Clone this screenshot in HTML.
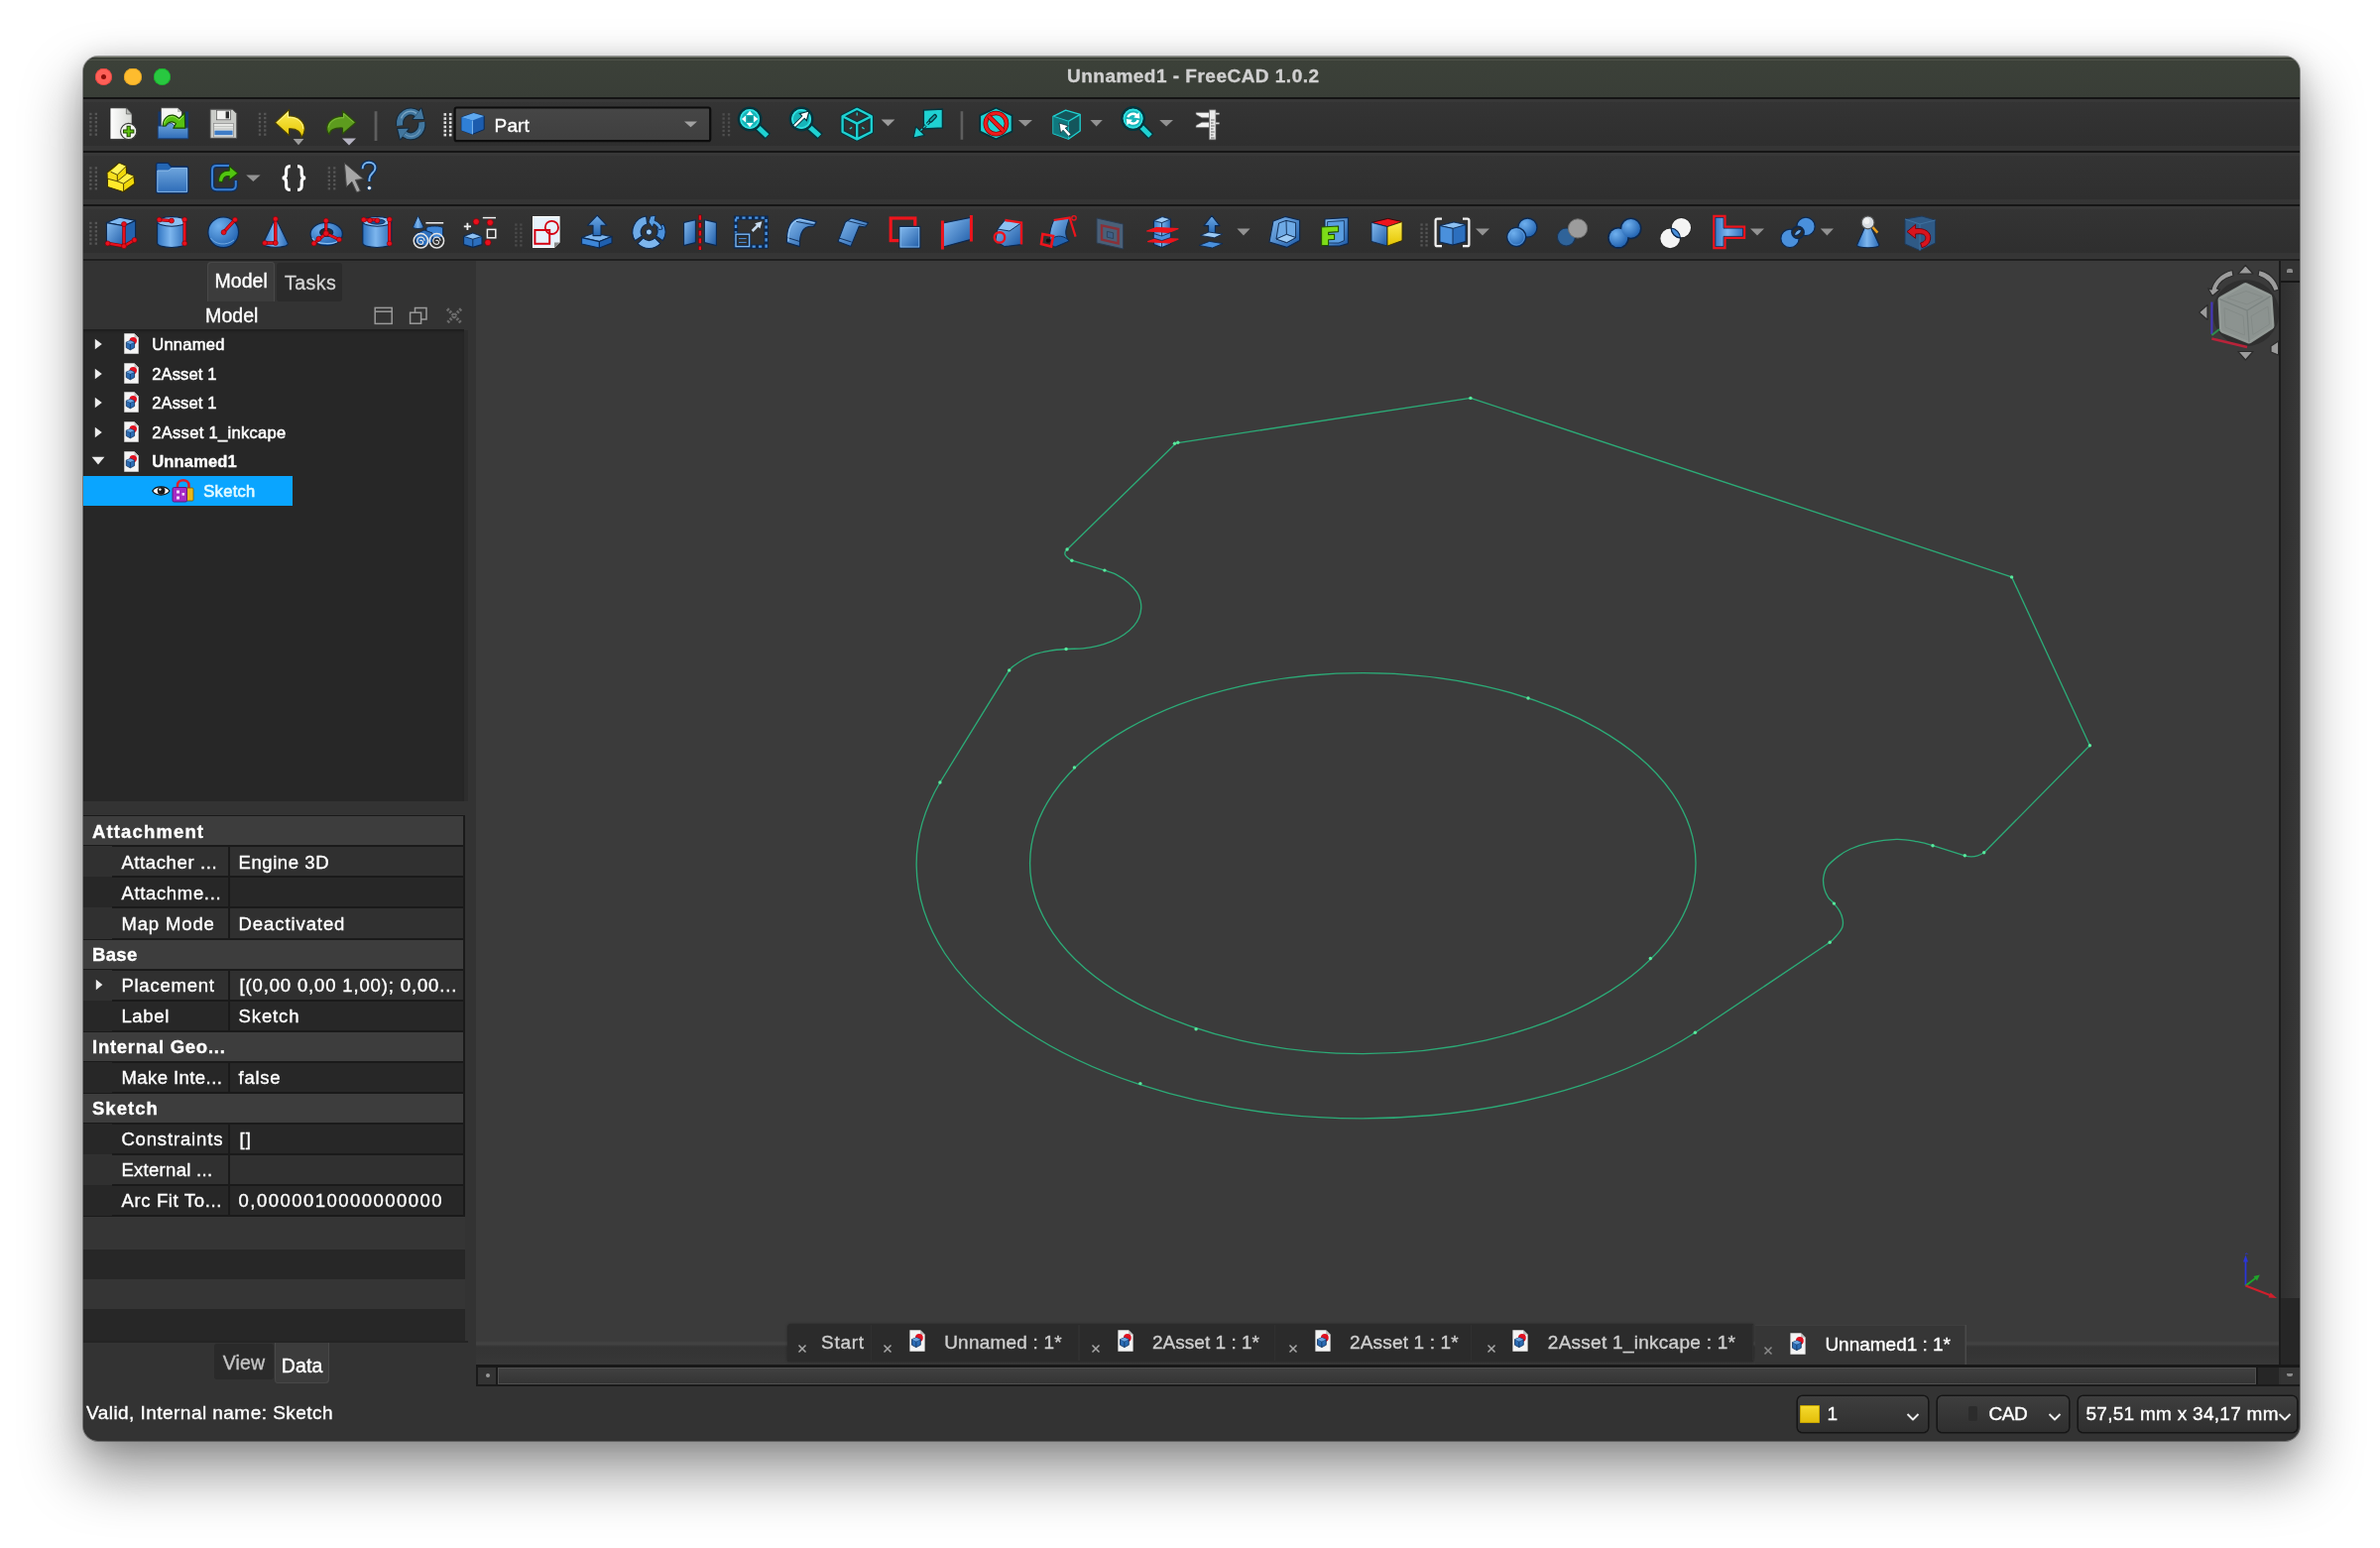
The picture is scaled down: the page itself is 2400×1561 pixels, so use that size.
<!DOCTYPE html>
<html><head><meta charset="utf-8"><title>FreeCAD</title><style>
html,body{margin:0;padding:0;}
body{width:2400px;height:1561px;background:#ffffff;position:relative;overflow:hidden;font-family:"Liberation Sans",sans-serif;}
#shadow{position:absolute;left:83.5px;top:56.5px;width:2235px;height:1396px;border-radius:15px;
 box-shadow:0 30px 58px 4px rgba(0,0,0,0.40),0 4px 26px 0 rgba(0,0,0,0.17),0 0 0 1px rgba(0,0,0,0.35);}
#win{position:absolute;left:83.5px;top:56.5px;width:2235px;height:1396px;border-radius:15px;overflow:hidden;background:#323232;}
#abs{position:absolute;left:-83.5px;top:-56.5px;width:2400px;height:1561px;will-change:transform;}
.r{position:absolute;display:block;}
.t{position:absolute;white-space:nowrap;line-height:1;-webkit-text-stroke:0.35px currentColor;}
</style></head><body>
<div id="shadow"></div>
<div id="win"><div id="abs">
<div class="r" style="left:0px;top:0px;width:2400px;height:1561px;background:#323232;"></div>
<div class="r" style="left:0px;top:56px;width:2400px;height:42.5px;background:#3a3f38;background:linear-gradient(#3c4139,#393e37);"></div>
<div class="r" style="left:0px;top:97.5px;width:2400px;height:2.5px;background:#141414;"></div>
<div class="r" style="left:0px;top:56.5px;width:2400px;height:1.4px;background:#74786c;"></div>
<div class="r" style="left:0px;top:57.9px;width:2400px;height:1.6px;background:#373b33;"></div>
<div class="r" style="left:0px;top:59.5px;width:2400px;height:1.6px;background:#4e5248;"></div>
<div class="r" style="left:0px;top:100px;width:2400px;height:51.5px;background:#2f2f2f;background:linear-gradient(#343434,#2e2e2e);"></div>
<div class="r" style="left:0px;top:153.5px;width:2400px;height:52.0px;background:#2f2f2f;background:linear-gradient(#343434,#2e2e2e);"></div>
<div class="r" style="left:0px;top:207.5px;width:2400px;height:52.5px;background:#2f2f2f;background:linear-gradient(#343434,#2e2e2e);"></div>
<div class="r" style="left:0px;top:100px;width:2400px;height:3px;background:#383838;"></div>
<div class="r" style="left:0px;top:146.5px;width:2400px;height:5px;background:#353535;"></div>
<div class="r" style="left:0px;top:151.5px;width:2400px;height:2px;background:#161616;"></div>
<div class="r" style="left:0px;top:153.5px;width:2400px;height:3px;background:#383838;"></div>
<div class="r" style="left:0px;top:200.5px;width:2400px;height:5px;background:#353535;"></div>
<div class="r" style="left:0px;top:205.5px;width:2400px;height:2px;background:#161616;"></div>
<div class="r" style="left:0px;top:207.5px;width:2400px;height:3px;background:#383838;"></div>
<div class="r" style="left:0px;top:255px;width:2400px;height:5px;background:#353535;"></div>
<div class="r" style="left:0px;top:260px;width:2400px;height:2px;background:#161616;"></div>
<div class="r" style="left:0px;top:260px;width:2400px;height:1px;background:#383838;"></div>
<div class="r" style="left:0px;top:261px;width:2400px;height:2px;background:#1f1f1f;"></div>
<div class="r" style="left:0px;top:263px;width:480px;height:1137px;background:#333333;"></div>
<div class="r" style="left:480px;top:263px;width:1818px;height:1089px;background:#3b3b3b;"></div>
<div class="r" style="left:95.7px;top:68.60000000000001px;width:17.6px;height:17.6px;border-radius:50%;background:#ff5f57;box-shadow:inset 0 0 0 0.7px #e0443e;"></div>
<div class="r" style="left:125.2px;top:68.60000000000001px;width:17.6px;height:17.6px;border-radius:50%;background:#febc2e;box-shadow:inset 0 0 0 0.7px #dea123;"></div>
<div class="r" style="left:154.7px;top:68.60000000000001px;width:17.6px;height:17.6px;border-radius:50%;background:#28c840;box-shadow:inset 0 0 0 0.7px #1aab29;"></div>
<div class="r" style="left:101.9px;top:74.80000000000001px;width:5.2px;height:5.2px;border-radius:50%;background:#8c0f0a;"></div>
<div class="t" style="left:1076.00px;top:67.42px;font-size:19px;color:#d0d0d0;font-weight:bold;letter-spacing:0.485px;">Unnamed1 - FreeCAD 1.0.2</div>
<svg class="r" style="left:84px;top:99px;" width="2235" height="163" viewBox="84 99 2235 163"><defs>
<linearGradient id="gB" x1="0" y1="0" x2="0" y2="1"><stop offset="0" stop-color="#6eaae6"/><stop offset="1" stop-color="#2668b4"/></linearGradient>
<linearGradient id="gBh" x1="0" y1="0" x2="1" y2="0"><stop offset="0" stop-color="#2f74c2"/><stop offset="0.45" stop-color="#7db6ee"/><stop offset="1" stop-color="#2a6ab6"/></linearGradient>
<linearGradient id="gBd" x1="0" y1="0" x2="1" y2="1"><stop offset="0" stop-color="#86bcf0"/><stop offset="1" stop-color="#1d5aa6"/></linearGradient>
<radialGradient id="gBr" cx="0.35" cy="0.3" r="0.8"><stop offset="0" stop-color="#6fb0ee"/><stop offset="1" stop-color="#1c5dac"/></radialGradient>
<linearGradient id="gP" x1="0" y1="0" x2="1" y2="0"><stop offset="0" stop-color="#ffffff"/><stop offset="1" stop-color="#d6d8d4"/></linearGradient>
<linearGradient id="gY" x1="0" y1="0" x2="0" y2="1"><stop offset="0" stop-color="#fdee58"/><stop offset="1" stop-color="#e4c400"/></linearGradient>
<linearGradient id="gF" x1="0" y1="0" x2="0" y2="1"><stop offset="0" stop-color="#6da4dc"/><stop offset="1" stop-color="#2f6db8"/></linearGradient>
<linearGradient id="gTb" x1="0" y1="0" x2="0" y2="1"><stop offset="0" stop-color="#464646"/><stop offset="1" stop-color="#3f3f3f"/></linearGradient>
</defs>
<rect x="90.2" y="113.8" width="2.3" height="2.3" fill="#565656"/><rect x="95.7" y="113.8" width="2.3" height="2.3" fill="#565656"/><rect x="90.2" y="117.9" width="2.3" height="2.3" fill="#565656"/><rect x="95.7" y="117.9" width="2.3" height="2.3" fill="#565656"/><rect x="90.2" y="122.0" width="2.3" height="2.3" fill="#565656"/><rect x="95.7" y="122.0" width="2.3" height="2.3" fill="#565656"/><rect x="90.2" y="126.2" width="2.3" height="2.3" fill="#565656"/><rect x="95.7" y="126.2" width="2.3" height="2.3" fill="#565656"/><rect x="90.2" y="130.3" width="2.3" height="2.3" fill="#565656"/><rect x="95.7" y="130.3" width="2.3" height="2.3" fill="#565656"/><rect x="90.2" y="134.5" width="2.3" height="2.3" fill="#565656"/><rect x="95.7" y="134.5" width="2.3" height="2.3" fill="#565656"/>
<path d="M111 108.8 H127.4 L133.2 115 V140.4 H111 Z" fill="url(#gP)" stroke="#1e1e1e" stroke-width="0.8"/>
<path d="M127.4 108.8 V115 H133.2 Z" fill="#b9bbb7" stroke="#444" stroke-width="0.6"/>
<circle cx="129.7" cy="132.5" r="8.1" fill="#f5f5f3" stroke="#3a3a3a" stroke-width="1.1"/>
<path d="M129.7 126.8 V138.2 M124 132.5 H135.4" stroke="#1f4a00" stroke-width="4.2"/>
<path d="M129.7 127.8 V137.2 M125 132.5 H134.4" stroke="#5fc010" stroke-width="2.2"/>
<path d="M159.4 112.4 H163 V128 H159.4 Z M186.6 112.4 H190 V128 H186.6 Z" fill="#16396e"/>
<path d="M162.4 108.8 H179 L183.4 113 V128 H162.4 Z" fill="#f6f6f4" stroke="#2a2a2a" stroke-width="0.6"/>
<path d="M179 108.8 V113 H183.4 Z" fill="#b9bbb7"/>
<path d="M159.2 127 H166 C168 127 170.6 123.4 173.6 124.6 C176 125.6 175.6 128.6 178 128.8 H189.8 V139.8 H159.2 Z" fill="url(#gF)" stroke="#173f7a" stroke-width="0.9"/>
<path d="M164.2 126.8 C164.6 119 169.5 115.6 174.5 116.2 C177.5 116.6 179.2 118.2 180.6 119.4 L186.2 113.8 L186.8 129.2 L174.8 129.2 L177.4 124.6 C175.4 123 172.6 122.6 170.4 123.6 C168.6 124.6 167.6 125.8 167.2 127 Z" fill="#56c112" stroke="#1a4a00" stroke-width="1.2" stroke-linejoin="round"/>
<path d="M165.6 124.4 C166.6 119.6 170.6 117 174.6 117.6 C177 118 178.8 119.6 180.8 121.2 L185 117" fill="none" stroke="#9be850" stroke-width="1"/>
<path d="M212 110.2 H234.5 L238.8 114.5 V139.4 H212 Z" fill="#c9cbc7" stroke="#4a4a4a" stroke-width="1"/>
<rect x="218.5" y="111.2" width="14" height="9.6" fill="#f2f2f0" stroke="#555" stroke-width="0.7"/>
<rect x="227.6" y="112.4" width="3.4" height="7" fill="#2b2b2b"/>
<rect x="215.4" y="124.6" width="20.2" height="13.4" fill="#e7e8e5" stroke="#8a8a8a" stroke-width="0.7"/>
<path d="M216 127.6 H235 M216 130 H235" stroke="#b4b6b2" stroke-width="0.8"/>
<rect x="216.4" y="131.6" width="18.2" height="4.6" fill="#3e7cc6"/>
<rect x="260.8" y="113.8" width="2.3" height="2.3" fill="#565656"/><rect x="266.1" y="113.8" width="2.3" height="2.3" fill="#565656"/><rect x="260.8" y="117.9" width="2.3" height="2.3" fill="#565656"/><rect x="266.1" y="117.9" width="2.3" height="2.3" fill="#565656"/><rect x="260.8" y="122.0" width="2.3" height="2.3" fill="#565656"/><rect x="266.1" y="122.0" width="2.3" height="2.3" fill="#565656"/><rect x="260.8" y="126.2" width="2.3" height="2.3" fill="#565656"/><rect x="266.1" y="126.2" width="2.3" height="2.3" fill="#565656"/><rect x="260.8" y="130.3" width="2.3" height="2.3" fill="#565656"/><rect x="266.1" y="130.3" width="2.3" height="2.3" fill="#565656"/><rect x="260.8" y="134.5" width="2.3" height="2.3" fill="#565656"/><rect x="266.1" y="134.5" width="2.3" height="2.3" fill="#565656"/>
<path d="M277.4 123.6 L291.6 110.4 L291.6 117 C300.6 116.6 307.8 122.6 307.2 130.8 C307 134 305.6 136.6 303.6 138.6 C303.8 133.4 299.8 129.4 291.6 129.8 L291.6 136.6 Z" fill="url(#gY)" stroke="#4e4300" stroke-width="1.2" stroke-linejoin="round"/>
<path d="M279.6 123.6 L290.4 113.6 L290.4 118.4 C299 117.8 305.6 122.8 305.8 130" fill="none" stroke="#fff7a0" stroke-width="0.9"/>
<path d="M295.6 140 H306.4 L301.0 146.2 Z" fill="#9c9c9c"/>
<path d="M358.8 123.4 L345.4 111.8 L345.4 117.4 C336.6 117.2 329.4 122.6 329.6 130 C329.8 132.6 330.8 134.4 332.4 135.6 C332.4 131.4 336.6 128.6 345.4 129 L345.4 135 Z" fill="#5d9c1e" stroke="#2b4d08" stroke-width="1.2" stroke-linejoin="round"/>
<path d="M356.6 123.4 L346.6 114.6 L346.6 118.8 C338.4 118.4 332 122.6 331.2 128.6" fill="none" stroke="#86c440" stroke-width="0.9"/>
<path d="M345 139.6 H359 L352.0 146.4 Z" fill="#b5b3c2"/>
<rect x="377.6" y="112.2" width="2.8" height="29.8" fill="#5e5e5e"/>
<path d="M403.1 126.6 A11.2 12.4 0 0 1 420.6 114.7" fill="none" stroke="#14293b" stroke-width="8.2"/><path d="M424.7 109.5 L416.6 120.0 L427.3 119.9 Z" fill="#14293b" stroke="#14293b" stroke-width="2.2" stroke-linejoin="round"/><path d="M403.1 126.6 A11.2 12.4 0 0 1 420.6 114.7" fill="none" stroke="#42779f" stroke-width="6"/><path d="M424.7 109.5 L416.6 120.0 L427.3 119.9 Z" fill="#42779f"/>
<path d="M425.3 123.2 A11.2 12.4 0 0 1 407.8 135.1" fill="none" stroke="#14293b" stroke-width="8.2"/><path d="M403.7 140.3 L411.8 129.8 L401.1 129.9 Z" fill="#14293b" stroke="#14293b" stroke-width="2.2" stroke-linejoin="round"/><path d="M425.3 123.2 A11.2 12.4 0 0 1 407.8 135.1" fill="none" stroke="#42779f" stroke-width="6"/><path d="M403.7 140.3 L411.8 129.8 L401.1 129.9 Z" fill="#42779f"/>
<path d="M404.6 119.4 A10 11 0 0 1 420 114.4" fill="none" stroke="#7aa6c6" stroke-width="1.4"/>
<path d="M423.8 130.4 A10 11 0 0 1 408.4 135.4" fill="none" stroke="#6a98ba" stroke-width="1.2"/>
<rect x="447.5" y="114.1" width="2.6" height="2.6" fill="#dedede"/><rect x="452.9" y="114.1" width="2.6" height="2.6" fill="#dedede"/><rect x="447.5" y="118.3" width="2.6" height="2.6" fill="#dedede"/><rect x="452.9" y="118.3" width="2.6" height="2.6" fill="#dedede"/><rect x="447.5" y="122.4" width="2.6" height="2.6" fill="#dedede"/><rect x="452.9" y="122.4" width="2.6" height="2.6" fill="#dedede"/><rect x="447.5" y="126.6" width="2.6" height="2.6" fill="#dedede"/><rect x="452.9" y="126.6" width="2.6" height="2.6" fill="#dedede"/><rect x="447.5" y="130.7" width="2.6" height="2.6" fill="#dedede"/><rect x="452.9" y="130.7" width="2.6" height="2.6" fill="#dedede"/><rect x="447.5" y="134.8" width="2.6" height="2.6" fill="#dedede"/><rect x="452.9" y="134.8" width="2.6" height="2.6" fill="#dedede"/>
<rect x="458.6" y="108.5" width="257.6" height="33.7" rx="2" fill="url(#gTb)" stroke="#0d0d0d" stroke-width="2.2"/>
<path d="M465.4 118.2 L477.6 114 L488.2 117 L488.2 130.6 L476.4 135.4 L465.4 131.4 Z" fill="#1c5cae" stroke="#0b2a55" stroke-width="1" stroke-linejoin="round"/>
<path d="M465.4 118.2 L477.6 114 L488.2 117 L476.4 121.6 Z" fill="#5fa8ee"/>
<path d="M465.4 118.2 L476.4 121.6 V135.4 L465.4 131.4 Z" fill="#2f7fd6"/>
<path d="M476.4 121.6 V135.4" stroke="#8cc4f8" stroke-width="0.9"/>
<path d="M690 122.4 H703 L696.5 128.2 Z" fill="#a2a2a2"/>
<rect x="728.5" y="114.2" width="2.3" height="2.3" fill="#4e4e4e"/><rect x="733.9" y="114.2" width="2.3" height="2.3" fill="#4e4e4e"/><rect x="728.5" y="118.4" width="2.3" height="2.3" fill="#4e4e4e"/><rect x="733.9" y="118.4" width="2.3" height="2.3" fill="#4e4e4e"/><rect x="728.5" y="122.5" width="2.3" height="2.3" fill="#4e4e4e"/><rect x="733.9" y="122.5" width="2.3" height="2.3" fill="#4e4e4e"/><rect x="728.5" y="126.7" width="2.3" height="2.3" fill="#4e4e4e"/><rect x="733.9" y="126.7" width="2.3" height="2.3" fill="#4e4e4e"/><rect x="728.5" y="130.8" width="2.3" height="2.3" fill="#4e4e4e"/><rect x="733.9" y="130.8" width="2.3" height="2.3" fill="#4e4e4e"/><rect x="728.5" y="135.0" width="2.3" height="2.3" fill="#4e4e4e"/><rect x="733.9" y="135.0" width="2.3" height="2.3" fill="#4e4e4e"/>
<path d="M762.8 126.7 L774.2 137.6" stroke="#05343c" stroke-width="8.4" stroke-linecap="butt"/><path d="M762.8 126.7 L773.6 137" stroke="#1fd2d2" stroke-width="5" stroke-linecap="butt"/><circle cx="756.1" cy="120" r="11.2" fill="#16b4b8" stroke="#05343c" stroke-width="2.6"/><circle cx="756.1" cy="120" r="9.1" fill="none" stroke="#30e0e0" stroke-width="1.8"/>
<path d="M756.1 111.8 L759.6 116 H752.6 Z M756.1 128.2 L759.6 124 H752.6 Z M747.9 120 L752.1 116.5 V123.5 Z M764.3 120 L760.1 116.5 V123.5 Z" fill="#ffffff"/>
<rect x="753.4" y="117.3" width="5.4" height="5.4" fill="#0e8f92"/>
<path d="M814.8 126.7 L827.0 137.6" stroke="#05343c" stroke-width="8.4" stroke-linecap="butt"/><path d="M814.8 126.7 L826.4 137" stroke="#1fd2d2" stroke-width="5" stroke-linecap="butt"/><circle cx="808.1" cy="120" r="11.2" fill="#16b4b8" stroke="#05343c" stroke-width="2.6"/><circle cx="808.1" cy="120" r="9.1" fill="none" stroke="#30e0e0" stroke-width="1.8"/>
<path d="M801.2 127 L811.6 116.6" stroke="#05343c" stroke-width="4"/><path d="M816 112 L813.4 121.6 L806.4 114.6 Z" fill="#ffffff" stroke="#05343c" stroke-width="1.2"/><path d="M801.2 127 L811.6 116.6" stroke="#ffffff" stroke-width="2.2"/>
<path d="M864.2 109.8 L878.8 117.2 V133 L864.2 140.4 L849.6 133 V117.2 Z M849.6 117.2 L864.2 124.6 L878.8 117.2 M864.2 124.6 V140.4" fill="none" stroke="#05343c" stroke-width="4.4" stroke-linejoin="round"/>
<path d="M864.2 109.8 L878.8 117.2 V133 L864.2 140.4 L849.6 133 V117.2 Z M849.6 117.2 L864.2 124.6 L878.8 117.2 M864.2 124.6 V140.4" fill="none" stroke="#1fd2d2" stroke-width="2.3" stroke-linejoin="round"/>
<path d="M864.2 113.6 V116.6 M856.8 130 L859.2 128.4 M871.6 130 L869.2 128.4" stroke="#1fd2d2" stroke-width="1.3"/>
<path d="M888.6 120.6 H902.4 L895.5 127.2 Z" fill="#9c9c9c"/>
<path d="M931.4 111 L950.4 110 L950.4 129 L931.4 130 Z" fill="#1fd2d2" stroke="#05343c" stroke-width="1.4" stroke-linejoin="round"/>
<path d="M940.6 119.4 L926.6 133.4" stroke="#05343c" stroke-width="3.2" stroke-dasharray="3 2"/><path d="M940.6 119.4 L926.6 133.4" stroke="#1fd2d2" stroke-width="1.2" stroke-dasharray="3 2"/>
<path d="M921 139 L923.6 127.6 L932.4 136.4 Z" fill="#1fd2d2" stroke="#05343c" stroke-width="1.2" stroke-linejoin="round"/>
<path d="M938.4 121.6 L942.8 117.2" stroke="#05343c" stroke-width="4.4" stroke-linecap="round"/><path d="M938.6 121.4 L942.6 117.4" stroke="#16a4a8" stroke-width="2" stroke-linecap="round"/>
<rect x="968.6" y="112.2" width="2.6" height="28.6" fill="#5e5e5e"/>
<path d="M1004.4 108.8 L1020.6 116.4 V132.6 L1004.4 140.4 L988.2 132.6 V116.4 Z" fill="#1fd2d2" stroke="#05343c" stroke-width="1.8" stroke-linejoin="round"/>
<circle cx="1004.4" cy="124.6" r="10.6" fill="none" stroke="#7a0000" stroke-width="4.6"/>
<circle cx="1004.4" cy="124.6" r="10.6" fill="none" stroke="#ee1c1c" stroke-width="3.2"/>
<path d="M997 117.2 L1011.8 132" stroke="#7a0000" stroke-width="4.6"/><path d="M997 117.2 L1011.8 132" stroke="#ee1c1c" stroke-width="3.2"/>
<path d="M1026.8 121 H1041 L1033.9 127.6 Z" fill="#929292"/>
<path d="M1062 117.4 L1074.6 111.2 L1089.2 115.4 V132 L1077.4 140.2 L1062 134.6 Z" fill="#14565c" stroke="#1fd2d2" stroke-width="1.3" stroke-linejoin="round"/>
<path d="M1062 117.4 L1077.4 122.4 L1089.2 115.4 M1077.4 122.4 V140.2" fill="none" stroke="#1fd2d2" stroke-width="1.3"/>
<path d="M1062 117.4 L1077.4 122.4 V140.2 L1062 134.6 Z" fill="#0f7f86" opacity="0.8"/>
<path d="M1068 124 L1077.6 127 L1074.2 129.2 L1080 135.4 L1077.6 137.4 L1072 131.2 L1069.6 134.2 Z" fill="#ffffff" stroke="#0a3038" stroke-width="0.8"/>
<path d="M1099.4 121 H1111.8 L1105.6 127.6 Z" fill="#929292"/>
<path d="M1149.3 126.3 L1160.6 137.6" stroke="#05343c" stroke-width="8.4" stroke-linecap="butt"/><path d="M1149.3 126.3 L1160 137" stroke="#1fd2d2" stroke-width="5" stroke-linecap="butt"/><circle cx="1142.6" cy="119.6" r="11.2" fill="#16b4b8" stroke="#05343c" stroke-width="2.6"/><circle cx="1142.6" cy="119.6" r="9.1" fill="none" stroke="#30e0e0" stroke-width="1.8"/>
<path d="M1136.2 118 C1137.4 113.8 1143 112.2 1146.8 115 L1148.6 113.2 L1149.4 119.4 L1143.2 118.6 L1145 116.8 C1142.6 115.2 1139.6 116.2 1138.6 118.6 Z" fill="#ffffff"/>
<path d="M1149 121.4 C1147.8 125.6 1142.2 127.2 1138.4 124.4 L1136.6 126.2 L1135.8 120 L1142 120.8 L1140.2 122.6 C1142.6 124.2 1145.6 123.2 1146.6 120.8 Z" fill="#ffffff"/>
<path d="M1169.2 121 H1183 L1176.1 127.6 Z" fill="#929292"/>
<path d="M1219.4 110.8 H1226 V140.8 H1219.4 Z" fill="#e9e9e9" stroke="#6a6a6a" stroke-width="0.7"/>
<path d="M1206 113.4 H1219.4 V118.8 H1212 L1206 115.4 Z" fill="#f2f2f2" stroke="#6a6a6a" stroke-width="0.7"/>
<path d="M1206 126.6 L1212 123.2 H1219.4 V128.6 H1206 Z" fill="#f2f2f2" stroke="#6a6a6a" stroke-width="0.7"/>
<path d="M1226 114.6 H1229.6 M1226 124.4 H1229.6" stroke="#d4d4d4" stroke-width="1.6"/>
<path d="M1221 121 H1224.6 M1221 124 H1223.6 M1221 127 H1224.6 M1221 130 H1223.6 M1221 133 H1224.6 M1221 136 H1223.6 M1221 139 H1224.6" stroke="#555" stroke-width="0.9"/>
<rect x="90.2" y="168.3" width="2.3" height="2.3" fill="#565656"/><rect x="95.7" y="168.3" width="2.3" height="2.3" fill="#565656"/><rect x="90.2" y="172.5" width="2.3" height="2.3" fill="#565656"/><rect x="95.7" y="172.5" width="2.3" height="2.3" fill="#565656"/><rect x="90.2" y="176.7" width="2.3" height="2.3" fill="#565656"/><rect x="95.7" y="176.7" width="2.3" height="2.3" fill="#565656"/><rect x="90.2" y="180.8" width="2.3" height="2.3" fill="#565656"/><rect x="95.7" y="180.8" width="2.3" height="2.3" fill="#565656"/><rect x="90.2" y="184.9" width="2.3" height="2.3" fill="#565656"/><rect x="95.7" y="184.9" width="2.3" height="2.3" fill="#565656"/><rect x="90.2" y="189.1" width="2.3" height="2.3" fill="#565656"/><rect x="95.7" y="189.1" width="2.3" height="2.3" fill="#565656"/>
<path d="M108.2 173.8 L120.2 164.3 L127.3 167.5 L127.7 174.6 L135 177.6 L135.9 185.2 L124.6 193.4 L108.8 188.3 Z" fill="#f0d80a" stroke="#3e3300" stroke-width="1.3" stroke-linejoin="round"/>
<path d="M111.6 173.2 L120.2 164.8 L127 167.8 L118.3 176.3 Z" fill="#fff45a"/>
<path d="M118.3 182.8 L127.8 175 L134.8 177.8 L124.6 185.2 Z" fill="#fff045"/>
<path d="M109 180.4 L118.3 182.8 L124.6 185.2 V193 L109 188 Z" fill="#ffe92a"/>
<path d="M108.6 174 L118.3 176.3 V182.8 L108.8 180.2 Z" fill="#f8e020"/>
<path d="M111.6 173.2 L118.3 176.3 L127.1 167.7 M118.3 176.3 V182.8 M108.6 180.2 L118.3 182.8 L127.8 175 M118.3 182.8 L124.6 185.2 L135.2 177.8 M124.6 185.2 V193.4" fill="none" stroke="#3e3300" stroke-width="0.9" stroke-linejoin="round"/>
<path d="M157.6 166 Q157.6 164.4 159.4 164.4 H169.4 L172.6 168 H188 Q189.8 168 189.8 169.8 V193 Q189.8 194.8 188 194.8 H159.4 Q157.6 194.8 157.6 193 Z" fill="#2466b4" stroke="#0c2d5e" stroke-width="1.3"/>
<path d="M158.8 172 H170 L173 169.6 H188.6 V193.4 H158.8 Z" fill="url(#gF)" stroke="#9cc5ee" stroke-width="0.8"/>
<path d="M231 167 H218.4 Q214 167 214 171.4 V186.8 Q214 191.2 218.4 191.2 H233.4 Q237.8 191.2 237.8 186.8 V182" fill="none" stroke="#0d2f5e" stroke-width="4.4"/>
<path d="M231 167 H218.4 Q214 167 214 171.4 V186.8 Q214 191.2 218.4 191.2 H233.4 Q237.8 191.2 237.8 186.8 V182" fill="none" stroke="#3a7ed0" stroke-width="2"/>
<path d="M220.6 183 C220.2 175.4 225.4 171.6 231.2 172.2 L231.4 167.6 L240 174.8 L231 181.8 L231.2 177.6 C227.4 177 224.8 179 224.4 183.6 Z" fill="#52c510" stroke="#1c4f00" stroke-width="1.1" stroke-linejoin="round"/>
<path d="M248.2 176.4 H262.6 L255.4 183 Z" fill="#929292"/>
<path d="M292.8 167.6 C289 167.6 288.6 169.4 288.6 172 V175.6 C288.6 178.4 287.4 179.5 284.6 179.5 C287.4 179.5 288.6 180.6 288.6 183.4 V187 C288.6 189.6 289 191.4 292.8 191.4" fill="none" stroke="#ffffff" stroke-width="3.2"/>
<path d="M300 167.6 C303.8 167.6 304.2 169.4 304.2 172 V175.6 C304.2 178.4 305.4 179.5 308.2 179.5 C305.4 179.5 304.2 180.6 304.2 183.4 V187 C304.2 189.6 303.8 191.4 300 191.4" fill="none" stroke="#ffffff" stroke-width="3.2"/>
<rect x="330.7" y="168.3" width="2.3" height="2.3" fill="#565656"/><rect x="336.1" y="168.3" width="2.3" height="2.3" fill="#565656"/><rect x="330.7" y="172.5" width="2.3" height="2.3" fill="#565656"/><rect x="336.1" y="172.5" width="2.3" height="2.3" fill="#565656"/><rect x="330.7" y="176.7" width="2.3" height="2.3" fill="#565656"/><rect x="336.1" y="176.7" width="2.3" height="2.3" fill="#565656"/><rect x="330.7" y="180.8" width="2.3" height="2.3" fill="#565656"/><rect x="336.1" y="180.8" width="2.3" height="2.3" fill="#565656"/><rect x="330.7" y="184.9" width="2.3" height="2.3" fill="#565656"/><rect x="336.1" y="184.9" width="2.3" height="2.3" fill="#565656"/><rect x="330.7" y="189.1" width="2.3" height="2.3" fill="#565656"/><rect x="336.1" y="189.1" width="2.3" height="2.3" fill="#565656"/>
<path d="M347.4 164.4 L366.4 180.4 L358.4 181.4 L363.4 192.4 L359.8 194 L354.8 183.2 L349.4 188.6 Z" fill="#a6a6a6" stroke="#4a4a4a" stroke-width="1" stroke-linejoin="round"/>
<path d="M365.6 170.2 C365.6 165.6 369 163.8 372 163.8 C375.6 163.8 378.4 166 378.4 169.4 C378.4 174.4 372.4 174.8 372.4 180.6 V183" fill="none" stroke="#0c2f5c" stroke-width="4.6"/>
<path d="M365.6 170.2 C365.6 165.6 369 163.8 372 163.8 C375.6 163.8 378.4 166 378.4 169.4 C378.4 174.4 372.4 174.8 372.4 180.6 V183" fill="none" stroke="#7ab4ee" stroke-width="1.9"/>
<circle cx="372.4" cy="189.6" r="2.2" fill="#e8e8e8" stroke="#11365f" stroke-width="1"/>
<rect x="90.2" y="223.8" width="2.3" height="2.3" fill="#565656"/><rect x="95.7" y="223.8" width="2.3" height="2.3" fill="#565656"/><rect x="90.2" y="227.9" width="2.3" height="2.3" fill="#565656"/><rect x="95.7" y="227.9" width="2.3" height="2.3" fill="#565656"/><rect x="90.2" y="232.1" width="2.3" height="2.3" fill="#565656"/><rect x="95.7" y="232.1" width="2.3" height="2.3" fill="#565656"/><rect x="90.2" y="236.2" width="2.3" height="2.3" fill="#565656"/><rect x="95.7" y="236.2" width="2.3" height="2.3" fill="#565656"/><rect x="90.2" y="240.3" width="2.3" height="2.3" fill="#565656"/><rect x="95.7" y="240.3" width="2.3" height="2.3" fill="#565656"/><rect x="90.2" y="244.5" width="2.3" height="2.3" fill="#565656"/><rect x="95.7" y="244.5" width="2.3" height="2.3" fill="#565656"/>
<path d="M107.4 224.6 L120.6 219.2 L136.6 222.4 L125 227.8 Z" fill="#7fb8f0" stroke="#0b2850" stroke-width="1.1" stroke-linejoin="round" />
<path d="M107.4 224.6 L125 227.8 V249 L107.4 245.2 Z" fill="url(#gBd)" stroke="#0b2850" stroke-width="1.1" stroke-linejoin="round" />
<path d="M125 227.8 L136.6 222.4 V242.4 L125 249 Z" fill="#2363ae" stroke="#0b2850" stroke-width="1.1" stroke-linejoin="round" />
<path d="M125 226 V248.2 M108.6 245.4 L125 248.2 L135.6 242" fill="none" stroke="#7a0008" stroke-width="3.4"/><path d="M125 226 V248.2 M108.6 245.4 L125 248.2 L135.6 242" fill="none" stroke="#e8101c" stroke-width="2.4"/>
<circle cx="125" cy="226" r="2.5" fill="#e8101c" stroke="#7a0008" stroke-width="0.6"/>
<circle cx="108.6" cy="245.4" r="2.5" fill="#e8101c" stroke="#7a0008" stroke-width="0.6"/>
<circle cx="125" cy="248.2" r="2.5" fill="#e8101c" stroke="#7a0008" stroke-width="0.6"/>
<circle cx="135.6" cy="242" r="2.5" fill="#e8101c" stroke="#7a0008" stroke-width="0.6"/>
<path d="M158.6 223.4 V245 C158.6 251 187.6 251 187.6 245 V223.4 Z" fill="url(#gBh)" stroke="#0b2850" stroke-width="1.1" stroke-linejoin="round" />
<ellipse cx="173.1" cy="223.4" rx="14.5" ry="4.8" fill="#8cc0f2" stroke="#0b2850" stroke-width="1.1"/>
<path d="M160.6 221.6 L173 222.6 M186.2 221.4 V245.4" fill="none" stroke="#7a0008" stroke-width="3.4"/><path d="M160.6 221.6 L173 222.6 M186.2 221.4 V245.4" fill="none" stroke="#e8101c" stroke-width="2.4"/>
<circle cx="160.6" cy="221.6" r="2.5" fill="#e8101c" stroke="#7a0008" stroke-width="0.6"/>
<circle cx="173" cy="222.6" r="2.5" fill="#e8101c" stroke="#7a0008" stroke-width="0.6"/>
<circle cx="186.2" cy="221.4" r="2.5" fill="#e8101c" stroke="#7a0008" stroke-width="0.6"/>
<circle cx="186.2" cy="245.4" r="2.5" fill="#e8101c" stroke="#7a0008" stroke-width="0.6"/>
<circle cx="225.2" cy="234.2" r="15.4" fill="url(#gBr)" stroke="#0b2850" stroke-width="1.3"/>
<path d="M212.4 240 C217 246.6 228 248.4 236 242" fill="none" stroke="#8cc0f2" stroke-width="1" opacity="0.7"/>
<path d="M225.6 234.2 L237 221.6" fill="none" stroke="#7a0008" stroke-width="3.4"/><path d="M225.6 234.2 L237 221.6" fill="none" stroke="#e8101c" stroke-width="2.4"/>
<circle cx="225.6" cy="234.2" r="2.5" fill="#e8101c" stroke="#7a0008" stroke-width="0.6"/>
<circle cx="237" cy="221.6" r="2.5" fill="#e8101c" stroke="#7a0008" stroke-width="0.6"/>
<path d="M277.8 219.6 L290.4 245.4 C290.4 250.6 265.2 250.6 265.2 245.4 Z" fill="url(#gBh)" stroke="#0b2850" stroke-width="1.1" stroke-linejoin="round" />
<path d="M277.8 220.8 V245 M267 245 H277.8" fill="none" stroke="#7a0008" stroke-width="3.4"/><path d="M277.8 220.8 V245 M267 245 H277.8" fill="none" stroke="#e8101c" stroke-width="2.4"/>
<circle cx="277.8" cy="220.8" r="2.5" fill="#e8101c" stroke="#7a0008" stroke-width="0.6"/>
<circle cx="267" cy="245" r="2.5" fill="#e8101c" stroke="#7a0008" stroke-width="0.6"/>
<circle cx="277.8" cy="245" r="2.5" fill="#e8101c" stroke="#7a0008" stroke-width="0.6"/>
<ellipse cx="329.2" cy="236" rx="16.2" ry="11.6" fill="url(#gBr)" stroke="#0b2850" stroke-width="1.3"/>
<ellipse cx="329.2" cy="234.4" rx="6.6" ry="4" fill="#2b2b2b" stroke="#0b2850" stroke-width="1.1"/>
<path d="M315 240 C318 247 340 247.6 343.4 240.4" fill="none" stroke="#8cc0f2" stroke-width="1.2"/>
<path d="M328.8 222.6 V235.4 L316.6 245.4 M328.8 235.4 L342 241.6" fill="none" stroke="#7a0008" stroke-width="3.2"/><path d="M328.8 222.6 V235.4 L316.6 245.4 M328.8 235.4 L342 241.6" fill="none" stroke="#e8101c" stroke-width="2.2"/>
<circle cx="328.8" cy="222.6" r="2.5" fill="#e8101c" stroke="#7a0008" stroke-width="0.6"/>
<circle cx="328.8" cy="235.4" r="2.8" fill="#e8101c" stroke="#7a0008" stroke-width="0.6"/>
<circle cx="316.6" cy="245.4" r="2.5" fill="#e8101c" stroke="#7a0008" stroke-width="0.6"/>
<circle cx="321.4" cy="240.8" r="2.5" fill="#e8101c" stroke="#7a0008" stroke-width="0.6"/>
<circle cx="342" cy="241.6" r="2.5" fill="#e8101c" stroke="#7a0008" stroke-width="0.6"/>
<path d="M365.8 223.4 V245 C365.8 251 394.8 251 394.8 245 V223.4 Z" fill="url(#gBh)" stroke="#0b2850" stroke-width="1.1" stroke-linejoin="round" />
<ellipse cx="380.3" cy="223.4" rx="14.5" ry="4.8" fill="#8cc0f2" stroke="#0b2850" stroke-width="1.1"/>
<ellipse cx="380.3" cy="223.6" rx="8" ry="2.6" fill="#1b4f94" stroke="#0b2850" stroke-width="0.8"/>
<path d="M366.8 221.6 H380.4 M392.8 221.2 V245.6" fill="none" stroke="#7a0008" stroke-width="3.4"/><path d="M366.8 221.6 H380.4 M392.8 221.2 V245.6" fill="none" stroke="#e8101c" stroke-width="2.4"/>
<circle cx="366.8" cy="221.6" r="2.5" fill="#e8101c" stroke="#7a0008" stroke-width="0.6"/>
<circle cx="373" cy="222.2" r="2.5" fill="#e8101c" stroke="#7a0008" stroke-width="0.6"/>
<circle cx="380.4" cy="222.4" r="2.5" fill="#e8101c" stroke="#7a0008" stroke-width="0.6"/>
<circle cx="392.8" cy="221.2" r="2.5" fill="#e8101c" stroke="#7a0008" stroke-width="0.6"/>
<circle cx="392.8" cy="245.6" r="2.5" fill="#e8101c" stroke="#7a0008" stroke-width="0.6"/>
<path d="M421.6 217.6 L427.2 229 C427.2 231 416.4 231 416.4 229 Z" fill="url(#gBh)" stroke="#0b2850" stroke-width="0.9" stroke-linejoin="round" />
<path d="M429.4 224.8 H447.2" stroke="#e8e8e8" stroke-width="1.6"/>
<path d="M430 230 V238 C430 241 446.6 241 446.6 238 V230 C446.6 227.4 430 227.4 430 230 Z" fill="#3f86d6" stroke="#0b2850" stroke-width="0.9" stroke-linejoin="round" />
<path d="M419 236 L428 232 L436 235 V244 L427 248 L419 245 Z" fill="#2c6fbe" stroke="#0b2850" stroke-width="0.9" stroke-linejoin="round" />
<circle cx="424.4" cy="242.8" r="7.2" fill="none" stroke="#e4e4e4" stroke-width="1.5"/>
<path d="M428.0 242.8 A3.6 3.6 0 1 0 424.4 246.4 A2 2 0 1 0 423.4 242.8" fill="none" stroke="#e4e4e4" stroke-width="1.2"/>
<circle cx="440.4" cy="242.8" r="7.2" fill="none" stroke="#e4e4e4" stroke-width="1.5"/>
<path d="M444.0 242.8 A3.6 3.6 0 1 0 440.4 246.4 A2 2 0 1 0 439.4 242.8" fill="none" stroke="#e4e4e4" stroke-width="1.2"/>
<path d="M467.6 238.4 L476.8 235 L486 238.4 V246.6 L476.8 249.4 L467.6 246.6 Z" fill="#2c6fbe" stroke="#0b2850" stroke-width="1.1" stroke-linejoin="round" />
<path d="M467.6 238.4 L476.8 235 L486 238.4 L476.8 241.2 Z" fill="#8cc0f2" stroke="#0b2850" stroke-width="0.9" stroke-linejoin="round" />
<path d="M476.8 241.2 V249.4" stroke="#0b2850" stroke-width="0.9"/>
<circle cx="480.2" cy="223.6" r="3.1" fill="#e8101c" stroke="#7a0008" stroke-width="0.6"/>
<circle cx="494.2" cy="224.4" r="3.1" fill="#e8101c" stroke="#7a0008" stroke-width="0.6"/>
<circle cx="492" cy="244.6" r="3.1" fill="#e8101c" stroke="#7a0008" stroke-width="0.6"/>
<path d="M471.4 224.8 V232 M467.8 228.4 H475" stroke="#f0f0f0" stroke-width="1.8"/>
<rect x="491.4" y="231.4" width="8.4" height="8.4" fill="none" stroke="#f0f0f0" stroke-width="1.5"/>
<path d="M486.8 219.6 H500" stroke="#f0f0f0" stroke-width="1.5"/>
<rect x="519.2" y="225.4" width="2.3" height="2.3" fill="#4a4a4a"/><rect x="524.2" y="225.4" width="2.3" height="2.3" fill="#4a4a4a"/><rect x="519.2" y="229.6" width="2.3" height="2.3" fill="#4a4a4a"/><rect x="524.2" y="229.6" width="2.3" height="2.3" fill="#4a4a4a"/><rect x="519.2" y="233.8" width="2.3" height="2.3" fill="#4a4a4a"/><rect x="524.2" y="233.8" width="2.3" height="2.3" fill="#4a4a4a"/><rect x="519.2" y="237.9" width="2.3" height="2.3" fill="#4a4a4a"/><rect x="524.2" y="237.9" width="2.3" height="2.3" fill="#4a4a4a"/><rect x="519.2" y="242.0" width="2.3" height="2.3" fill="#4a4a4a"/><rect x="524.2" y="242.0" width="2.3" height="2.3" fill="#4a4a4a"/><rect x="519.2" y="246.2" width="2.3" height="2.3" fill="#4a4a4a"/><rect x="524.2" y="246.2" width="2.3" height="2.3" fill="#4a4a4a"/>
<path d="M537 218 H564.6 V244.6 L559 250 H537 Z" fill="#ffffff"/>
<path d="M538 219 H563.6 V244 L558.6 249 H538 Z" fill="#e6f1fb"/>
<path d="M564.6 244.6 L559 250 V244.6 Z" fill="#8a8a8a"/>
<rect x="539.4" y="232" width="14.8" height="13.8" fill="none" stroke="#d40012" stroke-width="2"/>
<circle cx="556.4" cy="229.4" r="6.6" fill="none" stroke="#d40012" stroke-width="1.8"/>
<path d="M586.6 239.6 L599 235 L617 238.6 L604.4 243.6 Z" fill="#7db6ee" stroke="#0b2850" stroke-width="1.1" stroke-linejoin="round" />
<path d="M586.6 239.6 L604.4 243.6 V250 L586.6 246 Z" fill="#3d86d8" stroke="#0b2850" stroke-width="1.1" stroke-linejoin="round" />
<path d="M604.4 243.6 L617 238.6 V245 L604.4 250 Z" fill="#1f5fae" stroke="#0b2850" stroke-width="1.1" stroke-linejoin="round" />
<path d="M602.2 217.2 L611.8 227.2 H606 V237.6 H598 V227.2 H592.6 Z" fill="url(#gB)" stroke="#0b2850" stroke-width="1.1" stroke-linejoin="round" />
<path d="M651.6 218 A16 16 0 0 0 640.4 242.6 L647.4 238 A8 8 0 0 1 652.6 226 Z" fill="#6eaae6" stroke="#0b2850" stroke-width="1.1" stroke-linejoin="round" />
<path d="M643 245.6 A16 16 0 0 0 666 245.6 L660.4 240 A8 8 0 0 1 648.6 240 Z" fill="#7db6ee" stroke="#0b2850" stroke-width="1.1" stroke-linejoin="round" />
<path d="M668.4 242.6 A16 16 0 0 0 669 226 L662 229.6 A8 8 0 0 1 661.6 238 Z" fill="#4a90dc" stroke="#0b2850" stroke-width="1.1" stroke-linejoin="round" />
<path d="M656 218 L661 217.4 L660 222.4 C664 223.6 667 227 668 231 L664.4 231.6 C663.6 228.8 661.6 226.6 659 225.8 L658.4 229.6 L654 224 Z" fill="#5a9ee2" stroke="#0b2850" stroke-width="0.9" stroke-linejoin="round" />
<circle cx="654.4" cy="234" r="3" fill="#9ccaf4" stroke="#0b2850" stroke-width="1"/>
<path d="M689.6 224.4 L701.4 221.6 V244.6 L689.6 247.6 Z" fill="url(#gBd)" stroke="#0b2850" stroke-width="1.1" stroke-linejoin="round" />
<path d="M710.4 221.6 L722.4 224.4 V247.6 L710.4 244.6 Z" fill="url(#gBd)" stroke="#0b2850" stroke-width="1.1" stroke-linejoin="round" />
<path d="M705.9 216.4 V252" stroke="#7a0008" stroke-width="3.4" stroke-dasharray="5.4 2.4"/><path d="M705.9 216.8 V252" stroke="#e8101c" stroke-width="2.2" stroke-dasharray="4.6 3.2" stroke-dashoffset="-0.4"/>
<rect x="742" y="219.6" width="30.6" height="29" fill="none" stroke="#0b2850" stroke-width="4.2"/>
<rect x="742" y="219.6" width="30.6" height="29" fill="none" stroke="#4d94e2" stroke-width="2.4" stroke-dasharray="3.2 3.2"/>
<rect x="742" y="236.2" width="13.6" height="12.4" fill="#2d2d2d" stroke="#0b2850" stroke-width="3"/>
<rect x="742" y="236.2" width="13.6" height="12.4" fill="none" stroke="#7db6ee" stroke-width="1.4"/>
<path d="M745 240.6 H752.6 M745 244.4 H752.6" stroke="#4d94e2" stroke-width="1"/>
<path d="M758.6 233 L765 226.6" stroke="#c8dcf0" stroke-width="2.6"/><path d="M768.4 223.2 L766.4 230.4 L761.2 225.2 Z" fill="#c8dcf0"/>
<path d="M806.4 219.6 L823.4 223.6 L820.6 228.4 C811 227 806 233 806.4 248.6 L793.4 244.6 C793 229 797 221 806.4 219.6 Z" fill="url(#gBd)" stroke="#0b2850" stroke-width="1.1" stroke-linejoin="round" />
<path d="M803 223.4 L821.6 227 M794 239.6 L806.2 243.4" fill="none" stroke="#0b2850" stroke-width="0.9"/>
<path d="M795 243.2 C794.8 230 798.4 223 806.6 221.4 L821.4 224.8" fill="none" stroke="#a8d0f6" stroke-width="0.9"/>
<path d="M858.4 220 L875.6 224.6 L872.6 229 L866.4 228 L858 248.4 L845 243.6 L852.4 224 Z" fill="url(#gBd)" stroke="#0b2850" stroke-width="1.1" stroke-linejoin="round" />
<path d="M854.6 222.6 L873.6 227.4 M846 240 L858.6 244" fill="none" stroke="#0b2850" stroke-width="0.9"/>
<rect x="898.2" y="220" width="24.6" height="22.6" fill="none" stroke="#ee141c" stroke-width="3.2"/>
<path d="M907 228.4 H927.8 V250 H907 Z" fill="url(#gBd)" stroke="#0b2850" stroke-width="1.2" stroke-linejoin="round" />
<rect x="908" y="229.4" width="18.8" height="19.6" fill="none" stroke="#8cc0f2" stroke-width="0.8"/>
<path d="M951 225 L978.6 219.4 V241.6 L951 249 Z" fill="url(#gBd)" stroke="#0b2850" stroke-width="1.1" stroke-linejoin="round" />
<path d="M950.4 222.6 V251.4 M979.4 217 V243.6" stroke="#ee141c" stroke-width="3"/>
<path d="M1006 231 L1013.4 222 L1030 224.6 V246.6 L1013 248.6 L1003.6 243 Z" fill="url(#gBd)" stroke="#0b2850" stroke-width="1.1" stroke-linejoin="round" />
<path d="M1006 231 L1013.4 222 L1030 224.6 L1018 233 Z" fill="#8cc0f2" stroke="#0b2850" stroke-width="0.9" stroke-linejoin="round" />
<path d="M1013.4 222 L1030 224.6 V246.6" fill="none" stroke="#ee141c" stroke-width="2.4"/>
<circle cx="1008" cy="239.4" r="5.2" fill="none" stroke="#ee141c" stroke-width="2.4"/>
<path d="M1062.6 222 L1078.6 219.6 C1075.6 229 1072 236 1078 243 L1064 249 C1056 243 1058.6 231 1062.6 222 Z" fill="url(#gBd)" stroke="#0b2850" stroke-width="1.1" stroke-linejoin="round" />
<path d="M1061 240.6 C1066 236.6 1073.6 237.6 1078 243 L1064 249 C1060 248 1058.6 244 1061 240.6 Z" fill="#2363ae" stroke="#0b2850" stroke-width="0.9" stroke-linejoin="round" />
<path d="M1062.6 222 L1078.6 219.6 L1084.6 238.6" fill="none" stroke="#ee141c" stroke-width="2.2"/>
<circle cx="1083" cy="219.8" r="2.2" fill="none" stroke="#ee141c" stroke-width="1.3"/>
<path d="M1051.4 236 L1062 238 L1060 248.6 L1050 246 Z" fill="none" stroke="#ee141c" stroke-width="2.6"/>
<circle cx="1057" cy="242.6" r="2.2" fill="#111"/>
<path d="M1106 220 L1132.6 226 V251 L1106 245 Z" fill="#4a6078" stroke="#2a3c52" stroke-width="1"/>
<path d="M1111 227.4 L1127.6 231 V245.4 L1111 241.6 Z" fill="none" stroke="#8a3038" stroke-width="2.4"/>
<path d="M1116.4 233.4 L1122.6 234.8 V240.6 L1116.4 239.2 Z" fill="#3e5e86" stroke="#2a3c52" stroke-width="0.8"/>
<path d="M1163.4 222.6 L1172 218.6 L1180.4 221 V246 L1171.6 249.4 L1163.4 246.4 Z" fill="url(#gBh)" stroke="#0b2850" stroke-width="1.1" stroke-linejoin="round" />
<path d="M1163.4 222.6 L1172 218.6 L1180.4 221 L1171.6 224.6 Z" fill="#9ccaf4" stroke="#0b2850" stroke-width="0.9" stroke-linejoin="round" />
<path d="M1171.6 224.6 V249.4" stroke="#0b2850" stroke-width="0.9"/>
<path d="M1156.6 233 L1166 229.6 L1188 230.6 L1178.6 234.4 Z M1157.6 243.6 L1167 240.2 L1188 241.2 L1179 245 Z" fill="#ee141c" stroke="#ee141c" stroke-width="1.2" stroke-linejoin="round"/>
<path d="M1163.4 235.6 L1171.6 238 L1180.4 234.6 V239.6 L1171.6 242.6 L1163.4 240.2 Z" fill="#4a90dc" stroke="#0b2850" stroke-width="0.8" stroke-linejoin="round" />
<path d="M1222 217.4 L1230 227.6 H1225.4 V235.6 H1218.6 V227.6 H1214 Z" fill="url(#gB)" stroke="#0b2850" stroke-width="1.1" stroke-linejoin="round" />
<path d="M1210.4 237.4 L1219 234 L1232.8 236 L1224.6 239.8 Z" fill="#9ccaf4" stroke="#0b2850" stroke-width="0.9" stroke-linejoin="round" />
<path d="M1209 247.4 L1219.6 243.4 L1233 245.6 L1222.6 250 Z" fill="#4a90dc" stroke="#0b2850" stroke-width="0.9" stroke-linejoin="round" />
<path d="M1247.4 230.4 H1260.6 L1254.0 237.4 Z" fill="#929292"/>
<path d="M1284 223 L1296 218.4 L1310.6 222 V242.6 L1297.6 249.4 L1280 244 Z" fill="url(#gBd)" stroke="#0b2850" stroke-width="1.1" stroke-linejoin="round" />
<path d="M1289.6 225 L1297 222.4 L1306.6 224.6 V239.6 L1297.6 244.6 L1287 241 Z" fill="#6eaae6" stroke="#0b2850" stroke-width="0.9" stroke-linejoin="round" />
<path d="M1297 222.4 L1297.4 236.4 L1287 241 M1297.4 236.4 L1306.6 239.6" fill="none" stroke="#0b2850" stroke-width="0.9"/>
<path d="M1287 241 L1297.4 236.4 L1306.6 239.6 L1297.6 244.6 Z" fill="#9ccaf4" stroke="#0b2850" stroke-width="0.8" stroke-linejoin="round" />
<path d="M1336 221 L1359.4 219.4 V245.6 L1351 248 H1336 Z" fill="url(#gBd)" stroke="#0b2850" stroke-width="1.1" stroke-linejoin="round" />
<path d="M1338.6 223.6 L1355.4 222.6 V242.6 L1350 245 H1338.6 Z" fill="#5a9ee2" stroke="#0b2850" stroke-width="0.8" stroke-linejoin="round" />
<path d="M1332.6 229 L1349.6 228 V233.6 L1339.6 234.4 V236.6 L1345.6 236.2 V241.4 L1339.6 241.8 V247.4 L1332.6 247.6 Z" fill="#7ddc18" stroke="#234f00" stroke-width="1.1" stroke-linejoin="round"/>
<path d="M1383 224.4 L1399.6 220.4 L1414 223.6 L1399 228.6 Z" fill="#ee141c" stroke="#3a0004" stroke-width="0.9" stroke-linejoin="round"/>
<path d="M1383 224.4 L1399 228.6 V248 L1383 243.4 Z" fill="url(#gBd)" stroke="#0b2850" stroke-width="0.9" stroke-linejoin="round" />
<path d="M1399 228.6 L1414 223.6 V242.6 L1399 248 Z" fill="url(#gY)" stroke="#3a3000" stroke-width="0.9" stroke-linejoin="round"/>
<rect x="1432.4" y="225.4" width="2.3" height="2.3" fill="#555555"/><rect x="1437.4" y="225.4" width="2.3" height="2.3" fill="#555555"/><rect x="1432.4" y="229.6" width="2.3" height="2.3" fill="#555555"/><rect x="1437.4" y="229.6" width="2.3" height="2.3" fill="#555555"/><rect x="1432.4" y="233.8" width="2.3" height="2.3" fill="#555555"/><rect x="1437.4" y="233.8" width="2.3" height="2.3" fill="#555555"/><rect x="1432.4" y="237.9" width="2.3" height="2.3" fill="#555555"/><rect x="1437.4" y="237.9" width="2.3" height="2.3" fill="#555555"/><rect x="1432.4" y="242.0" width="2.3" height="2.3" fill="#555555"/><rect x="1437.4" y="242.0" width="2.3" height="2.3" fill="#555555"/><rect x="1432.4" y="246.2" width="2.3" height="2.3" fill="#555555"/><rect x="1437.4" y="246.2" width="2.3" height="2.3" fill="#555555"/>
<path d="M1452 227.6 L1466 224 L1478 226.6 V243.6 L1465 247 L1452 244 Z" fill="#2c6fbe" stroke="#0b2850" stroke-width="1.1" stroke-linejoin="round" />
<path d="M1452 227.6 L1466 224 L1478 226.6 L1465 230.4 Z" fill="#8cc0f2" stroke="#0b2850" stroke-width="0.9" stroke-linejoin="round" />
<path d="M1452 227.6 L1465 230.4 V247 L1452 244 Z" fill="#4a90dc" stroke="#0b2850" stroke-width="0.9" stroke-linejoin="round" />
<path d="M1454 220.6 H1449.4 Q1447.6 220.6 1447.6 222.4 V246.4 Q1447.6 248.2 1449.4 248.2 H1454" fill="none" stroke="#3a3a3a" stroke-width="4"/><path d="M1454 220.6 H1449.4 Q1447.6 220.6 1447.6 222.4 V246.4 Q1447.6 248.2 1449.4 248.2 H1454" fill="none" stroke="#f2f2f2" stroke-width="2.2"/>
<path d="M1475 220.6 H1479.6 Q1481.4 220.6 1481.4 222.4 V246.4 Q1481.4 248.2 1479.6 248.2 H1475" fill="none" stroke="#3a3a3a" stroke-width="4"/><path d="M1475 220.6 H1479.6 Q1481.4 220.6 1481.4 222.4 V246.4 Q1481.4 248.2 1479.6 248.2 H1475" fill="none" stroke="#f2f2f2" stroke-width="2.2"/>
<path d="M1488 230.4 H1502 L1495.0 237.4 Z" fill="#929292"/>
<circle cx="1540.4" cy="229.6" r="9.6" fill="url(#gBr)" stroke="#0b2850" stroke-width="1.3" />
<circle cx="1529.2" cy="239" r="9.6" fill="url(#gBr)" stroke="#0b2850" stroke-width="1.3" />
<circle cx="1529.2" cy="239" r="8" fill="none" stroke="#7db6ee" stroke-width="0.8" opacity="0.6"/>
<circle cx="1579.4" cy="239" r="9" fill="#2f6399" stroke="#1a3454" stroke-width="1.1" />
<circle cx="1591" cy="230.4" r="9.6" fill="#9c9c9c" stroke="#6e6e6e" stroke-width="1" />
<circle cx="1632" cy="239.8" r="9.6" fill="#3d86d8" stroke="#0b2850" stroke-width="2.6" />
<circle cx="1644.6" cy="230.4" r="9.6" fill="#3d86d8" stroke="#0b2850" stroke-width="2.6" />
<circle cx="1632" cy="239.8" r="9.3" fill="url(#gBr)"/><circle cx="1644.6" cy="230.4" r="9.3" fill="url(#gBr)"/>
<circle cx="1684.2" cy="240.4" r="10.4" fill="#f4f4f4" stroke="#2a2a2a" stroke-width="1.1" />
<circle cx="1695.4" cy="229.6" r="10.2" fill="#f4f4f4" stroke="#2a2a2a" stroke-width="1.1" />
<path d="M1685.2 230 A10.2 10.2 0 0 0 1694.4 240 A10.4 10.4 0 0 0 1685.2 230 Z" fill="#4a90dc" stroke="#0b2850" stroke-width="1.2"/>
<path d="M1728.4 218 H1739.4 V228.8 H1759 V239.8 H1739.4 V250 H1728.4 Z" fill="url(#gBh)" stroke="#ee141c" stroke-width="2.4" stroke-linejoin="miter"/>
<path d="M1729.8 219.4 H1738 V230.2 H1757.6 V238.4 H1738 V248.6 H1729.8 Z" fill="none" stroke="#0b2850" stroke-width="0.8"/>
<path d="M1765 230.4 H1779 L1772.0 237.4 Z" fill="#929292"/>
<circle cx="1805" cy="240.4" r="9.2" fill="#4a90dc" stroke="#0b2850" stroke-width="1.3" />
<circle cx="1821" cy="228.4" r="9.2" fill="#4a90dc" stroke="#0b2850" stroke-width="1.3" />
<circle cx="1813" cy="234.4" r="6.2" fill="#2b2b2b" stroke="#0b2850" stroke-width="1.4" />
<path d="M1808.4 234.6 A6.2 6.2 0 0 1 1817.6 234.2 A6.2 6.2 0 0 1 1808.4 234.6 Z" fill="#6eaae6" stroke="#0b2850" stroke-width="1.1" transform="rotate(-38 1813 234.4)"/>
<path d="M1835.8 230.4 H1849 L1842.4 237.4 Z" fill="#929292"/>
<path d="M1880.6 229 H1886.6 L1895 247 C1895 250.6 1872.6 250.6 1872.6 247 Z" fill="url(#gBh)" stroke="#0b2850" stroke-width="1.1" stroke-linejoin="round" />
<path d="M1888 228.6 L1893.4 234.6" stroke="#e8a020" stroke-width="2.4"/>
<circle cx="1883.6" cy="224.4" r="6.4" fill="#d8dde2" stroke="#555" stroke-width="1.2"/><circle cx="1882.4" cy="223" r="3" fill="#f6f6f6" opacity="0.8"/>
<path d="M1921 221 L1938 218 L1951.6 222 V245 L1936 252.6 L1921 246 Z" fill="#2f5a86" stroke="#1d3a5c" stroke-width="1"/>
<path d="M1921 221 L1936 226 L1951.6 222 M1936 226 V252.6" fill="none" stroke="#3f719f" stroke-width="1"/>
<path d="M1923 233.6 L1931.6 226.4 V230.6 C1941 229.6 1947.6 234 1946.6 241 C1946 245.4 1942.6 248.6 1938 249.6 L1936.6 245 C1940.6 244 1942.4 241.6 1941.6 238.6 C1940.6 235.6 1936.6 235.4 1931.6 236 V240.4 Z" fill="#d8141e" stroke="#70000a" stroke-width="0.9" stroke-linejoin="round"/></svg>
<div class="t" style="left:498.60px;top:116.62px;font-size:19px;color:#ffffff;letter-spacing:0.118px;">Part</div>
<div class="r" style="left:208.9px;top:263.5px;width:68.2px;height:40.5px;background:#3c3c3c;border-radius:4px 4px 0 0;box-shadow:inset 1px 1px 0 #484848,inset -1px 0 0 #484848;"></div>
<div class="r" style="left:279px;top:265.4px;width:66.4px;height:38.4px;background:#2b2b2b;border-radius:3px;"></div>
<div class="t" style="left:216.60px;top:274.49px;font-size:19.5px;color:#ffffff;letter-spacing:0.022px;">Model</div>
<div class="t" style="left:286.90px;top:276.49px;font-size:19.5px;color:#d4d4d4;letter-spacing:0.489px;">Tasks</div>
<div class="t" style="left:207.10px;top:309.19px;font-size:19.5px;color:#ffffff;letter-spacing:0.047px;">Model</div>
<svg class="r" style="left:377px;top:309px;" width="20" height="19" viewBox="0 0 20 19"><rect x="1.2" y="1.4" width="17" height="16" fill="none" stroke="#9a9a9a" stroke-width="1.5"/><path d="M1.2 5.2 H18.2" stroke="#9a9a9a" stroke-width="1.5"/></svg>
<svg class="r" style="left:412px;top:309px;" width="20" height="19" viewBox="0 0 20 19"><rect x="1.6" y="6.2" width="11" height="11" fill="none" stroke="#9a9a9a" stroke-width="1.5"/><path d="M6.5 6 V1.6 H18 V13 H13" fill="none" stroke="#9a9a9a" stroke-width="1.5"/></svg>
<svg class="r" style="left:448px;top:309px;" width="20" height="19" viewBox="0 0 20 19"><path d="M3 2.5 L17 16.5 M17 2.5 L3 16.5" stroke="#6c6c6c" stroke-width="3.2" stroke-dasharray="2.2 1.2"/></svg>
<div class="r" style="left:83.5px;top:331.5px;width:384.7px;height:476px;background:#272727;box-shadow:inset 0 3px 3px -1px #1e1e1e;"></div>
<div class="r" style="left:468px;top:333px;width:3.6px;height:474.6px;background:#2d2d2d;"></div>
<div class="r" style="left:83.5px;top:480.3px;width:211.8px;height:29.6px;background:#0aa5ff;"></div>
<svg class="r" style="left:94.5px;top:341.2px;" width="9" height="12" viewBox="0 0 9 12"><path d="M0.8 0.8 L7.8 6 L0.8 11.2 Z" fill="#ececec"/></svg>
<svg class="r" style="left:125px;top:336.3px;" width="15" height="21" viewBox="0 0 15 21"><path d="M0.5 0.5 H10.5 L14.5 4.5 V20.5 H0.5 Z" fill="#f4f4f4" stroke="#d8d8d8" stroke-width="0.6"/>
<path d="M10.5 0.5 V4.5 H14.5 Z" fill="#bdbdbd"/>
<circle cx="9.3" cy="7.6" r="3.7" fill="#e01020"/>
<path d="M2.3 9.2 L6.6 7.4 L10.6 9.2 L10.6 14.6 L6.4 16.8 L2.3 14.6 Z" fill="#2b6cb5" stroke="#0d2f5a" stroke-width="0.8" stroke-linejoin="round"/>
<path d="M2.3 9.2 L6.4 11.1 L10.6 9.2 M6.4 11.1 V16.8" fill="none" stroke="#0d2f5a" stroke-width="0.7"/>
<path d="M2.3 9.2 L6.6 7.4 L10.6 9.2 L6.4 11.1 Z" fill="#6aa5e0"/></svg>
<div class="t" style="left:153.20px;top:339.03px;font-size:16.5px;color:#ffffff;letter-spacing:0.276px;-webkit-text-stroke:0.5px currentColor;">Unnamed</div>
<svg class="r" style="left:94.5px;top:370.77px;" width="9" height="12" viewBox="0 0 9 12"><path d="M0.8 0.8 L7.8 6 L0.8 11.2 Z" fill="#ececec"/></svg>
<svg class="r" style="left:125px;top:365.87px;" width="15" height="21" viewBox="0 0 15 21"><path d="M0.5 0.5 H10.5 L14.5 4.5 V20.5 H0.5 Z" fill="#f4f4f4" stroke="#d8d8d8" stroke-width="0.6"/>
<path d="M10.5 0.5 V4.5 H14.5 Z" fill="#bdbdbd"/>
<circle cx="9.3" cy="7.6" r="3.7" fill="#e01020"/>
<path d="M2.3 9.2 L6.6 7.4 L10.6 9.2 L10.6 14.6 L6.4 16.8 L2.3 14.6 Z" fill="#2b6cb5" stroke="#0d2f5a" stroke-width="0.8" stroke-linejoin="round"/>
<path d="M2.3 9.2 L6.4 11.1 L10.6 9.2 M6.4 11.1 V16.8" fill="none" stroke="#0d2f5a" stroke-width="0.7"/>
<path d="M2.3 9.2 L6.6 7.4 L10.6 9.2 L6.4 11.1 Z" fill="#6aa5e0"/></svg>
<div class="t" style="left:153.20px;top:368.60px;font-size:16.5px;color:#ffffff;letter-spacing:0.157px;-webkit-text-stroke:0.5px currentColor;">2Asset 1</div>
<svg class="r" style="left:94.5px;top:400.34px;" width="9" height="12" viewBox="0 0 9 12"><path d="M0.8 0.8 L7.8 6 L0.8 11.2 Z" fill="#ececec"/></svg>
<svg class="r" style="left:125px;top:395.44px;" width="15" height="21" viewBox="0 0 15 21"><path d="M0.5 0.5 H10.5 L14.5 4.5 V20.5 H0.5 Z" fill="#f4f4f4" stroke="#d8d8d8" stroke-width="0.6"/>
<path d="M10.5 0.5 V4.5 H14.5 Z" fill="#bdbdbd"/>
<circle cx="9.3" cy="7.6" r="3.7" fill="#e01020"/>
<path d="M2.3 9.2 L6.6 7.4 L10.6 9.2 L10.6 14.6 L6.4 16.8 L2.3 14.6 Z" fill="#2b6cb5" stroke="#0d2f5a" stroke-width="0.8" stroke-linejoin="round"/>
<path d="M2.3 9.2 L6.4 11.1 L10.6 9.2 M6.4 11.1 V16.8" fill="none" stroke="#0d2f5a" stroke-width="0.7"/>
<path d="M2.3 9.2 L6.6 7.4 L10.6 9.2 L6.4 11.1 Z" fill="#6aa5e0"/></svg>
<div class="t" style="left:153.20px;top:398.17px;font-size:16.5px;color:#ffffff;letter-spacing:0.157px;-webkit-text-stroke:0.5px currentColor;">2Asset 1</div>
<svg class="r" style="left:94.5px;top:429.90999999999997px;" width="9" height="12" viewBox="0 0 9 12"><path d="M0.8 0.8 L7.8 6 L0.8 11.2 Z" fill="#ececec"/></svg>
<svg class="r" style="left:125px;top:425.01px;" width="15" height="21" viewBox="0 0 15 21"><path d="M0.5 0.5 H10.5 L14.5 4.5 V20.5 H0.5 Z" fill="#f4f4f4" stroke="#d8d8d8" stroke-width="0.6"/>
<path d="M10.5 0.5 V4.5 H14.5 Z" fill="#bdbdbd"/>
<circle cx="9.3" cy="7.6" r="3.7" fill="#e01020"/>
<path d="M2.3 9.2 L6.6 7.4 L10.6 9.2 L10.6 14.6 L6.4 16.8 L2.3 14.6 Z" fill="#2b6cb5" stroke="#0d2f5a" stroke-width="0.8" stroke-linejoin="round"/>
<path d="M2.3 9.2 L6.4 11.1 L10.6 9.2 M6.4 11.1 V16.8" fill="none" stroke="#0d2f5a" stroke-width="0.7"/>
<path d="M2.3 9.2 L6.6 7.4 L10.6 9.2 L6.4 11.1 Z" fill="#6aa5e0"/></svg>
<div class="t" style="left:153.20px;top:427.74px;font-size:16.5px;color:#ffffff;letter-spacing:0.317px;-webkit-text-stroke:0.5px currentColor;">2Asset 1_inkcape</div>
<svg class="r" style="left:91.5px;top:460.28000000000003px;" width="14" height="9" viewBox="0 0 14 9"><path d="M0.6 0.8 H13.4 L7 8.4 Z" fill="#ececec"/></svg>
<svg class="r" style="left:125px;top:454.58000000000004px;" width="15" height="21" viewBox="0 0 15 21"><path d="M0.5 0.5 H10.5 L14.5 4.5 V20.5 H0.5 Z" fill="#f4f4f4" stroke="#d8d8d8" stroke-width="0.6"/>
<path d="M10.5 0.5 V4.5 H14.5 Z" fill="#bdbdbd"/>
<circle cx="9.3" cy="7.6" r="3.7" fill="#e01020"/>
<path d="M2.3 9.2 L6.6 7.4 L10.6 9.2 L10.6 14.6 L6.4 16.8 L2.3 14.6 Z" fill="#2b6cb5" stroke="#0d2f5a" stroke-width="0.8" stroke-linejoin="round"/>
<path d="M2.3 9.2 L6.4 11.1 L10.6 9.2 M6.4 11.1 V16.8" fill="none" stroke="#0d2f5a" stroke-width="0.7"/>
<path d="M2.3 9.2 L6.6 7.4 L10.6 9.2 L6.4 11.1 Z" fill="#6aa5e0"/></svg>
<div class="t" style="left:153.20px;top:457.31px;font-size:16.5px;color:#ffffff;font-weight:bold;letter-spacing:0.178px;">Unnamed1</div>
<div class="t" style="left:205.30px;top:486.88px;font-size:16.5px;color:#e4faff;letter-spacing:0.311px;-webkit-text-stroke:0.6px currentColor;">Sketch</div>
<svg class="r" style="left:152.5px;top:488.04999999999995px;" width="19" height="14" viewBox="0 0 19 14"><path d="M0.8 7 C4 1.6 14.5 1.6 18 7 C14.5 12.4 4 12.4 0.8 7 Z" fill="#ffffff" stroke="#151515" stroke-width="1.3"/><circle cx="9.6" cy="6.8" r="3.9" fill="#1a1a1a"/><circle cx="8.4" cy="5.6" r="1.2" fill="#ffffff"/></svg>
<svg class="r" style="left:173px;top:482.04999999999995px;" width="23" height="25" viewBox="0 0 23 25"><path d="M6 11 V7.5 C6 0.5 17.5 0.5 17.5 7.5 V11" fill="none" stroke="#e0202a" stroke-width="2.6"/>
<rect x="12" y="10" width="10" height="13" rx="1" fill="#e8b81a" stroke="#7a5a00" stroke-width="0.8"/>
<rect x="1" y="9.5" width="14.5" height="14.5" rx="1.5" fill="#a62bc4" stroke="#5a1470" stroke-width="0.9"/>
<rect x="5" y="12.5" width="3" height="3" fill="#f3d8ff"/><rect x="5" y="18.5" width="3" height="3" fill="#f3d8ff"/><rect x="10.5" y="15" width="2.6" height="2.6" fill="#f3d8ff"/></svg>
<div class="r" style="left:83.5px;top:821.765px;width:385.3px;height:530.035px;background:#1a1a1a;"></div>
<div class="r" style="left:83.5px;top:823.265px;width:383.8px;height:29.07px;background:#3d3d3d;"></div>
<div class="t" style="left:93.00px;top:829.54px;font-size:18.5px;color:#ffffff;font-weight:bold;letter-spacing:1.138px;">Attachment</div>
<div class="r" style="left:83.5px;top:853.335px;width:29px;height:31.07px;background:#303030;"></div>
<div class="r" style="left:112.5px;top:854.335px;width:117.4px;height:29.07px;background:#303030;"></div>
<div class="r" style="left:231.9px;top:854.335px;width:235.4px;height:29.07px;background:#303030;"></div>
<div class="t" style="left:122.40px;top:860.61px;font-size:18.5px;color:#ffffff;letter-spacing:0.613px;">Attacher ...</div>
<div class="t" style="left:240.60px;top:860.61px;font-size:18.5px;color:#ffffff;letter-spacing:0.563px;">Engine 3D</div>
<div class="r" style="left:83.5px;top:884.405px;width:29px;height:31.07px;background:#272727;"></div>
<div class="r" style="left:112.5px;top:885.405px;width:117.4px;height:29.07px;background:#272727;"></div>
<div class="r" style="left:231.9px;top:885.405px;width:235.4px;height:29.07px;background:#272727;"></div>
<div class="t" style="left:122.40px;top:891.68px;font-size:18.5px;color:#ffffff;letter-spacing:0.663px;">Attachme...</div>
<div class="r" style="left:83.5px;top:915.475px;width:29px;height:31.07px;background:#303030;"></div>
<div class="r" style="left:112.5px;top:916.475px;width:117.4px;height:29.07px;background:#303030;"></div>
<div class="r" style="left:231.9px;top:916.475px;width:235.4px;height:29.07px;background:#303030;"></div>
<div class="t" style="left:122.40px;top:922.75px;font-size:18.5px;color:#ffffff;letter-spacing:0.871px;">Map Mode</div>
<div class="t" style="left:240.60px;top:922.75px;font-size:18.5px;color:#ffffff;letter-spacing:0.911px;">Deactivated</div>
<div class="r" style="left:83.5px;top:947.545px;width:383.8px;height:29.07px;background:#3d3d3d;"></div>
<div class="t" style="left:93.00px;top:953.82px;font-size:18.5px;color:#ffffff;font-weight:bold;letter-spacing:0.358px;">Base</div>
<div class="r" style="left:83.5px;top:977.615px;width:29px;height:31.07px;background:#303030;"></div>
<div class="r" style="left:112.5px;top:978.615px;width:117.4px;height:29.07px;background:#303030;"></div>
<div class="r" style="left:231.9px;top:978.615px;width:235.4px;height:29.07px;background:#303030;"></div>
<div class="t" style="left:122.40px;top:984.89px;font-size:18.5px;color:#ffffff;letter-spacing:0.762px;">Placement</div>
<div class="t" style="left:241.50px;top:984.89px;font-size:18.5px;color:#ffffff;letter-spacing:0.853px;">[(0,00 0,00 1,00); 0,00...</div>
<div class="r" style="left:83.5px;top:1008.6850000000001px;width:29px;height:31.07px;background:#272727;"></div>
<div class="r" style="left:112.5px;top:1009.6850000000001px;width:117.4px;height:29.07px;background:#272727;"></div>
<div class="r" style="left:231.9px;top:1009.6850000000001px;width:235.4px;height:29.07px;background:#272727;"></div>
<div class="t" style="left:122.40px;top:1015.96px;font-size:18.5px;color:#ffffff;letter-spacing:0.684px;">Label</div>
<div class="t" style="left:240.60px;top:1015.96px;font-size:18.5px;color:#ffffff;letter-spacing:0.869px;">Sketch</div>
<div class="r" style="left:83.5px;top:1040.7549999999999px;width:383.8px;height:29.07px;background:#3d3d3d;"></div>
<div class="t" style="left:93.00px;top:1047.03px;font-size:18.5px;color:#ffffff;font-weight:bold;letter-spacing:0.746px;">Internal Geo...</div>
<div class="r" style="left:83.5px;top:1070.8249999999998px;width:29px;height:31.07px;background:#272727;"></div>
<div class="r" style="left:112.5px;top:1071.8249999999998px;width:117.4px;height:29.07px;background:#272727;"></div>
<div class="r" style="left:231.9px;top:1071.8249999999998px;width:235.4px;height:29.07px;background:#272727;"></div>
<div class="t" style="left:122.40px;top:1078.10px;font-size:18.5px;color:#ffffff;letter-spacing:0.440px;">Make Inte...</div>
<div class="t" style="left:240.60px;top:1078.10px;font-size:18.5px;color:#ffffff;letter-spacing:0.731px;">false</div>
<div class="r" style="left:83.5px;top:1102.8949999999998px;width:383.8px;height:29.07px;background:#3d3d3d;"></div>
<div class="t" style="left:93.00px;top:1109.17px;font-size:18.5px;color:#ffffff;font-weight:bold;letter-spacing:1.026px;">Sketch</div>
<div class="r" style="left:83.5px;top:1132.965px;width:29px;height:31.07px;background:#272727;"></div>
<div class="r" style="left:112.5px;top:1133.965px;width:117.4px;height:29.07px;background:#272727;"></div>
<div class="r" style="left:231.9px;top:1133.965px;width:235.4px;height:29.07px;background:#272727;"></div>
<div class="t" style="left:122.40px;top:1140.24px;font-size:18.5px;color:#ffffff;letter-spacing:0.843px;">Constraints</div>
<div class="t" style="left:241.50px;top:1140.24px;font-size:18.5px;color:#ffffff;letter-spacing:1.220px;">[]</div>
<div class="r" style="left:83.5px;top:1164.0349999999999px;width:29px;height:31.07px;background:#303030;"></div>
<div class="r" style="left:112.5px;top:1165.0349999999999px;width:117.4px;height:29.07px;background:#303030;"></div>
<div class="r" style="left:231.9px;top:1165.0349999999999px;width:235.4px;height:29.07px;background:#303030;"></div>
<div class="t" style="left:122.40px;top:1171.31px;font-size:18.5px;color:#ffffff;letter-spacing:0.298px;">External ...</div>
<div class="r" style="left:83.5px;top:1195.1049999999998px;width:29px;height:31.07px;background:#272727;"></div>
<div class="r" style="left:112.5px;top:1196.1049999999998px;width:117.4px;height:29.07px;background:#272727;"></div>
<div class="r" style="left:231.9px;top:1196.1049999999998px;width:235.4px;height:29.07px;background:#272727;"></div>
<div class="t" style="left:122.40px;top:1202.38px;font-size:18.5px;color:#ffffff;letter-spacing:0.650px;">Arc Fit To...</div>
<div class="t" style="left:240.60px;top:1202.38px;font-size:18.5px;color:#ffffff;letter-spacing:1.468px;">0,0000010000000000</div>
<div class="r" style="left:83.5px;top:1227px;width:385.8px;height:33px;background:#353535;"></div>
<div class="r" style="left:83.5px;top:1260px;width:385.8px;height:30px;background:#272727;"></div>
<div class="r" style="left:83.5px;top:1290px;width:385.8px;height:30px;background:#353535;"></div>
<div class="r" style="left:83.5px;top:1320px;width:385.8px;height:31.799999999999955px;background:#272727;"></div>
<svg class="r" style="left:95.5px;top:987.15px;" width="9" height="12" viewBox="0 0 9 12"><path d="M0.8 0.8 L7.4 6 L0.8 11.2 Z" fill="#ececec"/></svg>
<div class="r" style="left:83.5px;top:1352px;width:388px;height:1.6px;background:#242424;"></div>
<div class="r" style="left:215.9px;top:1355.3px;width:60.5px;height:36.2px;background:#2a2a2a;border-radius:3px;"></div>
<div class="r" style="left:276.8px;top:1353.5px;width:55.5px;height:41.5px;background:#3c3c3c;border-radius:0 0 4px 4px;box-shadow:inset 1px 0 0 #484848,inset -1px -1px 0 #484848;"></div>
<div class="t" style="left:224.70px;top:1365.09px;font-size:19.5px;color:#c4c4c4;letter-spacing:0.129px;">View</div>
<div class="t" style="left:283.80px;top:1367.69px;font-size:19.5px;color:#ffffff;letter-spacing:0.103px;">Data</div>
<svg class="r" style="left:480px;top:263px;" width="1818" height="1089" viewBox="480 263 1818 1089"><path d="M1482.9 401.4 L1186.1 446.8 L1076.1 554 Q1069.8 559.6 1080.9 565.2 L1113.9 575.1 C1124.9 578.4 1122.0 577.6 1126.0 579.7 C1130.0 581.8 1134.2 584.6 1137.6 587.5 C1141.0 590.4 1144.2 594.1 1146.3 597.2 C1148.4 600.3 1149.3 603.2 1150.0 605.9 C1150.7 608.6 1150.9 610.9 1150.7 613.6 C1150.5 616.4 1149.9 619.5 1148.7 622.4 C1147.5 625.3 1145.9 628.2 1143.4 631.1 C1140.9 634.0 1137.4 637.2 1133.7 639.8 C1130.0 642.4 1125.6 644.7 1121.1 646.6 C1116.6 648.5 1111.4 650.2 1106.6 651.4 C1101.8 652.6 1097.3 653.4 1092.1 653.9 C1086.8 654.4 1080.8 654.1 1075.1 654.5 C1069.4 654.9 1063.3 655.4 1058.1 656.3 C1052.8 657.2 1047.9 658.2 1043.6 659.7 C1039.2 661.2 1035.4 663.1 1032.0 665.0 C1028.6 666.9 1025.7 669.0 1023.3 670.8 C1020.9 672.6 1021.0 671.6 1017.7 675.9 L947.9 789 A449 256.5 0 0 0 1709.4 1041.3 L1845.2 950.3 C1849.2 947.3 1850.7 945.1 1852.8 942.6 C1854.9 940.1 1856.9 937.5 1857.8 935.0 C1858.7 932.5 1858.6 930.1 1858.2 927.5 C1857.8 924.9 1856.8 921.8 1855.3 919.1 C1853.8 916.4 1851.4 913.5 1849.4 911.1 C1847.4 908.7 1845.1 907.2 1843.5 904.8 C1841.9 902.3 1840.5 899.6 1839.7 896.4 C1838.9 893.2 1838.2 889.3 1838.7 885.5 C1839.2 881.7 1840.2 877.4 1842.7 873.7 C1845.2 870.1 1849.7 866.6 1853.6 863.6 C1857.5 860.6 1860.6 858.4 1866.2 856.0 C1871.8 853.6 1879.5 850.9 1887.2 849.3 C1894.9 847.7 1905.1 846.6 1912.4 846.4 C1919.7 846.2 1924.9 847.2 1931.0 848.3 C1937.1 849.3 1938.3 849.2 1949.0 852.7 L1981.3 862.8 Q1991 866 2000.7 859.8 L2107.4 751.7 L2028.6 581.9 Z" fill="none" stroke="#2cab77" stroke-width="1.35" stroke-linejoin="round"/><ellipse cx="1374.3" cy="870.6" rx="335.7" ry="192" fill="none" stroke="#2cab77" stroke-width="1.35"/><circle cx="1482.9" cy="401.4" r="1.7" fill="#58e89c"/><circle cx="1184.5" cy="447.3" r="1.7" fill="#58e89c"/><circle cx="1187.8" cy="446.3" r="1.7" fill="#58e89c"/><circle cx="1076.1" cy="554" r="1.7" fill="#58e89c"/><circle cx="1080.9" cy="565.2" r="1.7" fill="#58e89c"/><circle cx="1113.9" cy="575.1" r="1.7" fill="#58e89c"/><circle cx="1075.1" cy="654.5" r="1.7" fill="#58e89c"/><circle cx="1017.7" cy="675.9" r="1.7" fill="#58e89c"/><circle cx="947.9" cy="789" r="1.7" fill="#58e89c"/><circle cx="1149.9" cy="1092.6" r="1.7" fill="#58e89c"/><circle cx="1709.4" cy="1041.3" r="1.7" fill="#58e89c"/><circle cx="1845.2" cy="950.3" r="1.7" fill="#58e89c"/><circle cx="1849.4" cy="911.1" r="1.7" fill="#58e89c"/><circle cx="1949" cy="852.7" r="1.7" fill="#58e89c"/><circle cx="1981.3" cy="862.8" r="1.7" fill="#58e89c"/><circle cx="2000.7" cy="859.8" r="1.7" fill="#58e89c"/><circle cx="2107.4" cy="751.7" r="1.7" fill="#58e89c"/><circle cx="2028.6" cy="581.9" r="1.7" fill="#58e89c"/><circle cx="1541" cy="704" r="1.7" fill="#58e89c"/><circle cx="1083.4" cy="773.9" r="1.7" fill="#58e89c"/><circle cx="1206.1" cy="1037.7" r="1.7" fill="#58e89c"/><circle cx="1664.3" cy="966.5" r="1.7" fill="#58e89c"/></svg>
<svg class="r" style="left:2180px;top:250px;" width="117.6" height="130" viewBox="0 0 117.6 130">
<g fill="#9c9c9c" stroke="#2b2b2b" stroke-width="1.2" stroke-linejoin="round">
<path d="M84.4 17.5 L92 26 L76.8 26 Z"/>
<path d="M84.4 113 L92 104.5 L76.8 104.5 Z"/>
<path d="M37.5 65 L46 57.5 L46 72.5 Z"/>
<path d="M50 42 C52 33 60 25 71 22.5 L72 28 C63 30.5 57.5 35 55.5 41 L58.5 42 L51 48.5 L46.5 40.8 Z"/>
<path d="M98 22.5 C108 24.5 116 32 118 42 L113 43.5 C110.5 35.5 105 30.5 97 28 Z"/>
<path d="M110 99 L117.6 94 L117.6 108 L110 105 Z"/>
</g>
<circle cx="84.8" cy="65.5" r="33.5" fill="#2f2f2f"/>
<path d="M84.5 39 L107.5 50 L109.5 78.5 L88 92.5 L62 82 L60.5 52.5 Z" fill="#8c9390" stroke="#8c9390" stroke-width="8" stroke-linejoin="round"/>
<path d="M84.5 36.5 L110 48.5 L112 80 L88 95 L59.5 83.5 L58 51.5 Z" fill="none" stroke="#9aa19d" stroke-width="1.6" stroke-linejoin="round" opacity="0.7"/>
<path d="M58 51.5 L86 63 L110 48.5 M86 63 L88 95" fill="none" stroke="#7b8380" stroke-width="1.3"/>
<path d="M66 50.5 L85 43.5 L102 49.5 L86 57 Z" fill="none" stroke="#848b88" stroke-width="1"/>
<path d="M63 60.5 L82 68.5 L83.5 88 L64 80 Z" fill="none" stroke="#848b88" stroke-width="1"/>
<path d="M90 69 L107 59 L108.5 77 L92 87.5 Z" fill="none" stroke="#848b88" stroke-width="1"/>
<path d="M50.4 54.5 V87" stroke="#4437b8" stroke-width="2.2"/>
<path d="M50.4 88 L58 82" stroke="#2f8d4e" stroke-width="2"/>
<path d="M50.4 91.5 L86 100" stroke="#b8233a" stroke-width="2.6"/>
</svg>
<svg class="r" style="left:2253px;top:1263px;" width="45" height="48" viewBox="0 0 45 48">
<path d="M11.5 33.5 V8" stroke="#2a35d8" stroke-width="1.8"/>
<path d="M11.5 2.5 L14 9.5 H9 Z" fill="#2a35d8"/>
<path d="M11.5 33.5 L22 25.5" stroke="#1fa52a" stroke-width="1.8"/>
<path d="M25.8 22.4 L19.5 24 L23 28.6 Z" fill="#1fa52a"/>
<path d="M11.5 33.5 L36 43" stroke="#d01f2c" stroke-width="2"/>
<path d="M43 46 L34.5 45.6 L36.6 40.4 Z" fill="#d01f2c"/>
<text x="11" y="1.5" font-size="5.5" fill="#2a35d8" font-family="Liberation Sans">Z</text>
</svg>
<div class="r" style="left:2298px;top:263px;width:21px;height:1114px;background:#262626;"></div>
<div class="r" style="left:2298px;top:263px;width:1.5px;height:1114px;background:#1b1b1b;"></div>
<div class="r" style="left:2299.5px;top:263px;width:19px;height:20px;background:#343434;border-bottom:2px solid #171717;"></div>
<div class="r" style="left:2299.5px;top:285px;width:19px;height:1024px;background:#343434;background:linear-gradient(90deg,#2f2f2f,#383838);"></div>
<div class="r" style="left:2306px;top:271px;width:6px;height:3.5px;background:#8a8a8a;border-radius:2px 2px 0 0;"></div>
<div class="r" style="left:2299.5px;top:1377.5px;width:19px;height:18px;background:#343434;border-top:1.5px solid #171717;"></div>
<div class="r" style="left:2306px;top:1385px;width:6px;height:3px;background:#8a8a8a;border-radius:0 0 2px 2px;"></div>
<div class="r" style="left:480px;top:1352px;width:1818px;height:25px;background:#353535;background:linear-gradient(#3b3b3b 0,#424242 2px,#424242 3.5px,#343434 6px,#353535 14px,#383838 24px);"></div>
<div class="r" style="left:793.8px;top:1334.7px;width:974.5px;height:38px;background:#2b2b2b;border-radius:4px 0 0 0;box-shadow:0 0 3px rgba(0,0,0,0.35);"></div>
<div class="r" style="left:877.5px;top:1336px;width:1.5px;height:36px;background:#303030;"></div>
<svg class="r" style="left:804.4px;top:1355px;" width="10" height="10" viewBox="0 0 10 10"><path d="M1.5 1.5 L8.5 8.5 M8.5 1.5 L1.5 8.5" stroke="#a8a8a8" stroke-width="1.5"/></svg>
<div class="t" style="left:828.00px;top:1343.52px;font-size:19px;color:#cfcfcf;letter-spacing:0.719px;">Start</div>
<div class="r" style="left:1087.1px;top:1336px;width:1.5px;height:36px;background:#303030;"></div>
<svg class="r" style="left:890px;top:1355px;" width="10" height="10" viewBox="0 0 10 10"><path d="M1.5 1.5 L8.5 8.5 M8.5 1.5 L1.5 8.5" stroke="#a8a8a8" stroke-width="1.5"/></svg>
<svg class="r" style="left:916.7px;top:1340.5px;" width="16" height="22" viewBox="0 0 15 21"><path d="M0.5 0.5 H10.5 L14.5 4.5 V20.5 H0.5 Z" fill="#f4f4f4" stroke="#d8d8d8" stroke-width="0.6"/>
<path d="M10.5 0.5 V4.5 H14.5 Z" fill="#bdbdbd"/>
<circle cx="9.3" cy="7.6" r="3.7" fill="#e01020"/>
<path d="M2.3 9.2 L6.6 7.4 L10.6 9.2 L10.6 14.6 L6.4 16.8 L2.3 14.6 Z" fill="#2b6cb5" stroke="#0d2f5a" stroke-width="0.8" stroke-linejoin="round"/>
<path d="M2.3 9.2 L6.4 11.1 L10.6 9.2 M6.4 11.1 V16.8" fill="none" stroke="#0d2f5a" stroke-width="0.7"/>
<path d="M2.3 9.2 L6.6 7.4 L10.6 9.2 L6.4 11.1 Z" fill="#6aa5e0"/></svg>
<div class="t" style="left:952.20px;top:1343.52px;font-size:19px;color:#cfcfcf;letter-spacing:0.202px;">Unnamed : 1*</div>
<div class="r" style="left:1284.5px;top:1336px;width:1.5px;height:36px;background:#303030;"></div>
<svg class="r" style="left:1099.7px;top:1355px;" width="10" height="10" viewBox="0 0 10 10"><path d="M1.5 1.5 L8.5 8.5 M8.5 1.5 L1.5 8.5" stroke="#a8a8a8" stroke-width="1.5"/></svg>
<svg class="r" style="left:1126.6px;top:1340.5px;" width="16" height="22" viewBox="0 0 15 21"><path d="M0.5 0.5 H10.5 L14.5 4.5 V20.5 H0.5 Z" fill="#f4f4f4" stroke="#d8d8d8" stroke-width="0.6"/>
<path d="M10.5 0.5 V4.5 H14.5 Z" fill="#bdbdbd"/>
<circle cx="9.3" cy="7.6" r="3.7" fill="#e01020"/>
<path d="M2.3 9.2 L6.6 7.4 L10.6 9.2 L10.6 14.6 L6.4 16.8 L2.3 14.6 Z" fill="#2b6cb5" stroke="#0d2f5a" stroke-width="0.8" stroke-linejoin="round"/>
<path d="M2.3 9.2 L6.4 11.1 L10.6 9.2 M6.4 11.1 V16.8" fill="none" stroke="#0d2f5a" stroke-width="0.7"/>
<path d="M2.3 9.2 L6.6 7.4 L10.6 9.2 L6.4 11.1 Z" fill="#6aa5e0"/></svg>
<div class="t" style="left:1162.00px;top:1343.52px;font-size:19px;color:#cfcfcf;letter-spacing:0.023px;">2Asset 1 : 1*</div>
<div class="r" style="left:1482.5px;top:1336px;width:1.5px;height:36px;background:#303030;"></div>
<svg class="r" style="left:1299px;top:1355px;" width="10" height="10" viewBox="0 0 10 10"><path d="M1.5 1.5 L8.5 8.5 M8.5 1.5 L1.5 8.5" stroke="#a8a8a8" stroke-width="1.5"/></svg>
<svg class="r" style="left:1325.7px;top:1340.5px;" width="16" height="22" viewBox="0 0 15 21"><path d="M0.5 0.5 H10.5 L14.5 4.5 V20.5 H0.5 Z" fill="#f4f4f4" stroke="#d8d8d8" stroke-width="0.6"/>
<path d="M10.5 0.5 V4.5 H14.5 Z" fill="#bdbdbd"/>
<circle cx="9.3" cy="7.6" r="3.7" fill="#e01020"/>
<path d="M2.3 9.2 L6.6 7.4 L10.6 9.2 L10.6 14.6 L6.4 16.8 L2.3 14.6 Z" fill="#2b6cb5" stroke="#0d2f5a" stroke-width="0.8" stroke-linejoin="round"/>
<path d="M2.3 9.2 L6.4 11.1 L10.6 9.2 M6.4 11.1 V16.8" fill="none" stroke="#0d2f5a" stroke-width="0.7"/>
<path d="M2.3 9.2 L6.6 7.4 L10.6 9.2 L6.4 11.1 Z" fill="#6aa5e0"/></svg>
<div class="t" style="left:1361.00px;top:1343.52px;font-size:19px;color:#cfcfcf;letter-spacing:0.164px;">2Asset 1 : 1*</div>
<div class="r" style="left:1766.8px;top:1336px;width:1.5px;height:36px;background:#303030;"></div>
<svg class="r" style="left:1499px;top:1355px;" width="10" height="10" viewBox="0 0 10 10"><path d="M1.5 1.5 L8.5 8.5 M8.5 1.5 L1.5 8.5" stroke="#a8a8a8" stroke-width="1.5"/></svg>
<svg class="r" style="left:1525.3px;top:1340.5px;" width="16" height="22" viewBox="0 0 15 21"><path d="M0.5 0.5 H10.5 L14.5 4.5 V20.5 H0.5 Z" fill="#f4f4f4" stroke="#d8d8d8" stroke-width="0.6"/>
<path d="M10.5 0.5 V4.5 H14.5 Z" fill="#bdbdbd"/>
<circle cx="9.3" cy="7.6" r="3.7" fill="#e01020"/>
<path d="M2.3 9.2 L6.6 7.4 L10.6 9.2 L10.6 14.6 L6.4 16.8 L2.3 14.6 Z" fill="#2b6cb5" stroke="#0d2f5a" stroke-width="0.8" stroke-linejoin="round"/>
<path d="M2.3 9.2 L6.4 11.1 L10.6 9.2 M6.4 11.1 V16.8" fill="none" stroke="#0d2f5a" stroke-width="0.7"/>
<path d="M2.3 9.2 L6.6 7.4 L10.6 9.2 L6.4 11.1 Z" fill="#6aa5e0"/></svg>
<div class="t" style="left:1560.80px;top:1343.52px;font-size:19px;color:#cfcfcf;letter-spacing:0.271px;">2Asset 1_inkcape : 1*</div>
<div class="r" style="left:1770.2px;top:1336px;width:213.3px;height:39.5px;background:#363636;box-shadow:inset -1.5px 0 0 #4a4a4a, inset 0 1px 0 #3f3f3f;"></div>
<svg class="r" style="left:1778.3px;top:1357px;" width="10" height="10" viewBox="0 0 10 10"><path d="M1.5 1.5 L8.5 8.5 M8.5 1.5 L1.5 8.5" stroke="#8a8a8a" stroke-width="1.5"/></svg>
<svg class="r" style="left:1804.9px;top:1343.5px;" width="16" height="22" viewBox="0 0 15 21"><path d="M0.5 0.5 H10.5 L14.5 4.5 V20.5 H0.5 Z" fill="#f4f4f4" stroke="#d8d8d8" stroke-width="0.6"/>
<path d="M10.5 0.5 V4.5 H14.5 Z" fill="#bdbdbd"/>
<circle cx="9.3" cy="7.6" r="3.7" fill="#e01020"/>
<path d="M2.3 9.2 L6.6 7.4 L10.6 9.2 L10.6 14.6 L6.4 16.8 L2.3 14.6 Z" fill="#2b6cb5" stroke="#0d2f5a" stroke-width="0.8" stroke-linejoin="round"/>
<path d="M2.3 9.2 L6.4 11.1 L10.6 9.2 M6.4 11.1 V16.8" fill="none" stroke="#0d2f5a" stroke-width="0.7"/>
<path d="M2.3 9.2 L6.6 7.4 L10.6 9.2 L6.4 11.1 Z" fill="#6aa5e0"/></svg>
<div class="t" style="left:1840.40px;top:1346.32px;font-size:19px;color:#ffffff;letter-spacing:-0.012px;">Unnamed1 : 1*</div>
<div class="r" style="left:480px;top:1376px;width:1839px;height:3px;background:#181818;"></div>
<div class="r" style="left:480px;top:1378.5px;width:1818px;height:17.5px;background:#1a1a1a;"></div>
<div class="r" style="left:481.5px;top:1379px;width:18px;height:16.5px;background:#333333;"></div>
<div class="r" style="left:489.7px;top:1385px;width:4px;height:4px;border-radius:50%;background:#9a9a9a;"></div>
<div class="r" style="left:502.3px;top:1379px;width:1773px;height:16.5px;background:#3a3a3a;background:linear-gradient(#414141,#343434);box-shadow:inset 0 0 0 1px #505050;"></div>
<div class="r" style="left:2276.5px;top:1379px;width:21.5px;height:16.5px;background:#262626;"></div>
<div class="r" style="left:480px;top:1395.5px;width:1839px;height:2.5px;background:#1a1a1a;"></div>
<div class="r" style="left:0px;top:1398px;width:2400px;height:60px;background:#333333;"></div>
<div class="t" style="left:87.00px;top:1415.42px;font-size:19px;color:#ffffff;letter-spacing:0.455px;">Valid, Internal name: Sketch</div>
<div class="r" style="left:1812.5px;top:1407.5px;width:131px;height:36px;background:#353535;border-radius:5px;background:linear-gradient(#3e3e3e,#2f2f2f);box-shadow:0 0 0 1.6px #161616;"></div>
<div class="r" style="left:1953.6px;top:1407.5px;width:132.3px;height:36px;background:#353535;border-radius:5px;background:linear-gradient(#3e3e3e,#2f2f2f);box-shadow:0 0 0 1.6px #161616;"></div>
<div class="r" style="left:2095.8px;top:1407.5px;width:220.7px;height:36px;background:#353535;border-radius:5px;background:linear-gradient(#3e3e3e,#2f2f2f);box-shadow:0 0 0 1.6px #161616;"></div>
<div class="r" style="left:1815.3px;top:1416.5px;width:19.5px;height:18px;background:#f0cf18;border-radius:1.5px;background:linear-gradient(#f6dc30,#e2bd08);box-shadow:inset 0 0 0 1px #c7a600;"></div>
<div class="t" style="left:1842.50px;top:1416.42px;font-size:19px;color:#ffffff;">1</div>
<svg class="r" style="left:1922px;top:1423.5px;" width="14" height="10" viewBox="0 0 14 10"><path d="M1.5 2 L7 7.5 L12.5 2" fill="none" stroke="#f0f0f0" stroke-width="1.9" stroke-linejoin="round"/></svg>
<div class="r" style="left:1985px;top:1418px;width:8.5px;height:15px;background:#2c2c2c;border-radius:2px;"></div>
<div class="t" style="left:2005.40px;top:1416.42px;font-size:19px;color:#ffffff;letter-spacing:-0.408px;">CAD</div>
<svg class="r" style="left:2065px;top:1423.5px;" width="14" height="10" viewBox="0 0 14 10"><path d="M1.5 2 L7 7.5 L12.5 2" fill="none" stroke="#f0f0f0" stroke-width="1.9" stroke-linejoin="round"/></svg>
<div class="t" style="left:2103.50px;top:1416.42px;font-size:19px;color:#ffffff;letter-spacing:0.277px;">57,51 mm x 34,17 mm</div>
<svg class="r" style="left:2297px;top:1423.5px;" width="14" height="10" viewBox="0 0 14 10"><path d="M1.5 2 L7 7.5 L12.5 2" fill="none" stroke="#f0f0f0" stroke-width="1.9" stroke-linejoin="round"/></svg>
</div></div>
</body></html>
